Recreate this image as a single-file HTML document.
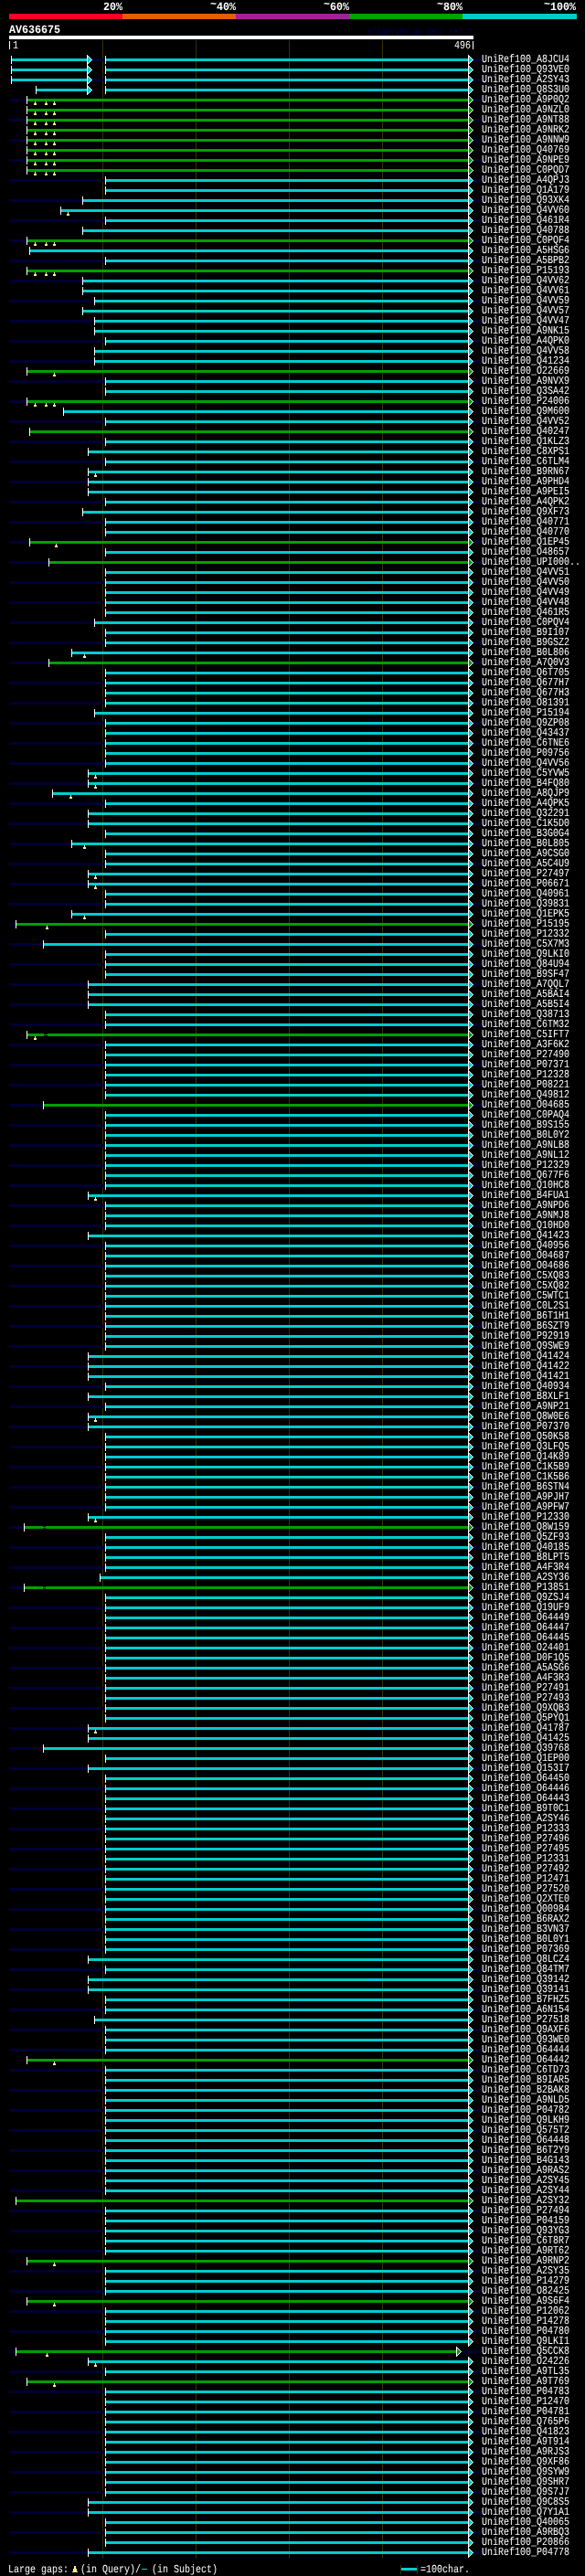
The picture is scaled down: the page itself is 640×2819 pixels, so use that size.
<!DOCTYPE html>
<html><head><meta charset="utf-8"><style>
html,body{margin:0;padding:0;background:#000;}
body{width:640px;height:2819px;overflow:hidden;position:relative;}
svg{position:absolute;left:0;top:0;display:block;}
text{font-family:"Liberation Mono";}
.lab text{font-size:12.3px;fill:#fff;text-rendering:geometricPrecision;}
.wc{will-change:transform;position:absolute;left:0;top:0;}
</style></head><body>
<div class="wc"><svg width="640" height="2819" viewBox="0 0 640 2819" shape-rendering="crispEdges">
<rect x="0" y="0" width="640" height="2819" fill="#000"/>
<g font-family="Liberation Mono" font-weight="bold" font-size="12.5" fill="#fff" text-anchor="end" style="text-rendering:geometricPrecision">
<text x="134" y="11" textLength="21" lengthAdjust="spacingAndGlyphs">20%</text>
<text x="258" y="11" textLength="21" lengthAdjust="spacingAndGlyphs">40%</text><text x="237" y="8" textLength="7" lengthAdjust="spacingAndGlyphs">~</text>
<text x="382" y="11" textLength="21" lengthAdjust="spacingAndGlyphs">60%</text><text x="361" y="8" textLength="7" lengthAdjust="spacingAndGlyphs">~</text>
<text x="506" y="11" textLength="21" lengthAdjust="spacingAndGlyphs">80%</text><text x="485" y="8" textLength="7" lengthAdjust="spacingAndGlyphs">~</text>
<text x="630" y="11" textLength="28" lengthAdjust="spacingAndGlyphs">100%</text><text x="602" y="8" textLength="7" lengthAdjust="spacingAndGlyphs">~</text>
</g>
<rect x="10" y="15" width="124" height="6" fill="#ff0022"/>
<rect x="134" y="15" width="124" height="6" fill="#e06000"/>
<rect x="258" y="15" width="124" height="6" fill="#a020a0"/>
<rect x="382" y="15" width="124" height="6" fill="#00a000"/>
<rect x="506" y="15" width="125" height="6" fill="#00cccc"/>
<text x="10" y="36" font-family="Liberation Mono" font-weight="bold" font-size="12.5" fill="#fff" textLength="56" lengthAdjust="spacingAndGlyphs" style="text-rendering:geometricPrecision">AV636675</text>
<text x="402" y="37" font-family="Liberation Mono" font-weight="bold" font-size="8.3" fill="#000040">AlignView.pm Beta rel.7</text>
<rect x="10" y="39" width="508" height="4" fill="#fff"/>
<rect x="10" y="45" width="1" height="9" fill="#fff"/>
<rect x="517" y="45" width="1" height="9" fill="#fff"/>
<g class="lab">
<rect x="112" y="44" width="1" height="2756" fill="#333300"/>
<rect x="214" y="44" width="1" height="2756" fill="#333300"/>
<rect x="316" y="44" width="1" height="2756" fill="#333300"/>
<rect x="418" y="44" width="1" height="2756" fill="#333300"/>
<rect x="10" y="64" width="517" height="3" fill="#000033"/>
<rect x="13" y="64" width="82" height="3" fill="#00cccc"/>
<rect x="12" y="61" width="1" height="9" fill="#fff"/>
<path d="M95.5 60.5L100.5 65.5L95.5 70.5Z" fill="#00cccc" stroke="#fff" stroke-width="1"/>
<rect x="116" y="64" width="396" height="3" fill="#00cccc"/>
<rect x="115" y="61" width="1" height="9" fill="#fff"/>
<path d="M512.5 60.5L517.5 65.5L512.5 70.5Z" fill="#00cccc" stroke="#fff" stroke-width="1"/>
<text x="527" y="68" textLength="96" lengthAdjust="spacingAndGlyphs">UniRef100_A8JCU4</text>
<rect x="13" y="75" width="82" height="3" fill="#00cccc"/>
<rect x="12" y="72" width="1" height="9" fill="#fff"/>
<path d="M95.5 71.5L100.5 76.5L95.5 81.5Z" fill="#00cccc" stroke="#fff" stroke-width="1"/>
<rect x="116" y="75" width="396" height="3" fill="#00cccc"/>
<rect x="115" y="72" width="1" height="9" fill="#fff"/>
<path d="M512.5 71.5L517.5 76.5L512.5 81.5Z" fill="#00cccc" stroke="#fff" stroke-width="1"/>
<text x="527" y="79" textLength="96" lengthAdjust="spacingAndGlyphs">UniRef100_Q93VE0</text>
<rect x="10" y="86" width="517" height="3" fill="#000033"/>
<rect x="13" y="86" width="82" height="3" fill="#00cccc"/>
<rect x="12" y="83" width="1" height="9" fill="#fff"/>
<path d="M95.5 82.5L100.5 87.5L95.5 92.5Z" fill="#00cccc" stroke="#fff" stroke-width="1"/>
<rect x="116" y="86" width="396" height="3" fill="#00cccc"/>
<rect x="115" y="83" width="1" height="9" fill="#fff"/>
<path d="M512.5 82.5L517.5 87.5L512.5 92.5Z" fill="#00cccc" stroke="#fff" stroke-width="1"/>
<text x="527" y="90" textLength="96" lengthAdjust="spacingAndGlyphs">UniRef100_A2SY43</text>
<rect x="40" y="97" width="55" height="3" fill="#00cccc"/>
<rect x="39" y="94" width="1" height="9" fill="#fff"/>
<path d="M95.5 93.5L100.5 98.5L95.5 103.5Z" fill="#00cccc" stroke="#fff" stroke-width="1"/>
<rect x="116" y="97" width="396" height="3" fill="#00cccc"/>
<rect x="115" y="94" width="1" height="9" fill="#fff"/>
<path d="M512.5 93.5L517.5 98.5L512.5 103.5Z" fill="#00cccc" stroke="#fff" stroke-width="1"/>
<text x="527" y="101" textLength="96" lengthAdjust="spacingAndGlyphs">UniRef100_Q8S3U0</text>
<rect x="10" y="108" width="517" height="3" fill="#000033"/>
<rect x="30" y="108" width="482" height="3" fill="#00a000"/>
<rect x="29" y="105" width="1" height="9" fill="#fff"/>
<path d="M512.5 104.5L517.5 109.5L512.5 114.5Z" fill="#00a000" stroke="#fff" stroke-width="1"/>
<rect x="38" y="111" width="1" height="2" fill="#ffee88"/><rect x="37" y="113" width="3" height="2" fill="#ffee88"/>
<rect x="50" y="111" width="1" height="2" fill="#ffee88"/><rect x="49" y="113" width="3" height="2" fill="#ffee88"/>
<rect x="59" y="111" width="1" height="2" fill="#ffee88"/><rect x="58" y="113" width="3" height="2" fill="#ffee88"/>
<text x="527" y="112" textLength="96" lengthAdjust="spacingAndGlyphs">UniRef100_A9P0Q2</text>
<rect x="30" y="119" width="482" height="3" fill="#00a000"/>
<rect x="29" y="116" width="1" height="9" fill="#fff"/>
<path d="M512.5 115.5L517.5 120.5L512.5 125.5Z" fill="#00a000" stroke="#fff" stroke-width="1"/>
<rect x="38" y="122" width="1" height="2" fill="#ffee88"/><rect x="37" y="124" width="3" height="2" fill="#ffee88"/>
<rect x="50" y="122" width="1" height="2" fill="#ffee88"/><rect x="49" y="124" width="3" height="2" fill="#ffee88"/>
<rect x="59" y="122" width="1" height="2" fill="#ffee88"/><rect x="58" y="124" width="3" height="2" fill="#ffee88"/>
<text x="527" y="123" textLength="96" lengthAdjust="spacingAndGlyphs">UniRef100_A9NZL0</text>
<rect x="10" y="130" width="517" height="3" fill="#000033"/>
<rect x="30" y="130" width="482" height="3" fill="#00a000"/>
<rect x="29" y="127" width="1" height="9" fill="#fff"/>
<path d="M512.5 126.5L517.5 131.5L512.5 136.5Z" fill="#00a000" stroke="#fff" stroke-width="1"/>
<rect x="38" y="133" width="1" height="2" fill="#ffee88"/><rect x="37" y="135" width="3" height="2" fill="#ffee88"/>
<rect x="50" y="133" width="1" height="2" fill="#ffee88"/><rect x="49" y="135" width="3" height="2" fill="#ffee88"/>
<rect x="59" y="133" width="1" height="2" fill="#ffee88"/><rect x="58" y="135" width="3" height="2" fill="#ffee88"/>
<text x="527" y="134" textLength="96" lengthAdjust="spacingAndGlyphs">UniRef100_A9NT88</text>
<rect x="30" y="141" width="482" height="3" fill="#00a000"/>
<rect x="29" y="138" width="1" height="9" fill="#fff"/>
<path d="M512.5 137.5L517.5 142.5L512.5 147.5Z" fill="#00a000" stroke="#fff" stroke-width="1"/>
<rect x="38" y="144" width="1" height="2" fill="#ffee88"/><rect x="37" y="146" width="3" height="2" fill="#ffee88"/>
<rect x="50" y="144" width="1" height="2" fill="#ffee88"/><rect x="49" y="146" width="3" height="2" fill="#ffee88"/>
<rect x="59" y="144" width="1" height="2" fill="#ffee88"/><rect x="58" y="146" width="3" height="2" fill="#ffee88"/>
<text x="527" y="145" textLength="96" lengthAdjust="spacingAndGlyphs">UniRef100_A9NRK2</text>
<rect x="10" y="152" width="517" height="3" fill="#000033"/>
<rect x="30" y="152" width="482" height="3" fill="#00a000"/>
<rect x="29" y="149" width="1" height="9" fill="#fff"/>
<path d="M512.5 148.5L517.5 153.5L512.5 158.5Z" fill="#00a000" stroke="#fff" stroke-width="1"/>
<rect x="38" y="155" width="1" height="2" fill="#ffee88"/><rect x="37" y="157" width="3" height="2" fill="#ffee88"/>
<rect x="50" y="155" width="1" height="2" fill="#ffee88"/><rect x="49" y="157" width="3" height="2" fill="#ffee88"/>
<rect x="59" y="155" width="1" height="2" fill="#ffee88"/><rect x="58" y="157" width="3" height="2" fill="#ffee88"/>
<text x="527" y="156" textLength="96" lengthAdjust="spacingAndGlyphs">UniRef100_A9NNW9</text>
<rect x="30" y="163" width="482" height="3" fill="#00a000"/>
<rect x="29" y="160" width="1" height="9" fill="#fff"/>
<path d="M512.5 159.5L517.5 164.5L512.5 169.5Z" fill="#00a000" stroke="#fff" stroke-width="1"/>
<rect x="38" y="166" width="1" height="2" fill="#ffee88"/><rect x="37" y="168" width="3" height="2" fill="#ffee88"/>
<rect x="50" y="166" width="1" height="2" fill="#ffee88"/><rect x="49" y="168" width="3" height="2" fill="#ffee88"/>
<rect x="59" y="166" width="1" height="2" fill="#ffee88"/><rect x="58" y="168" width="3" height="2" fill="#ffee88"/>
<text x="527" y="167" textLength="96" lengthAdjust="spacingAndGlyphs">UniRef100_Q40769</text>
<rect x="10" y="174" width="517" height="3" fill="#000033"/>
<rect x="30" y="174" width="482" height="3" fill="#00a000"/>
<rect x="29" y="171" width="1" height="9" fill="#fff"/>
<path d="M512.5 170.5L517.5 175.5L512.5 180.5Z" fill="#00a000" stroke="#fff" stroke-width="1"/>
<rect x="38" y="177" width="1" height="2" fill="#ffee88"/><rect x="37" y="179" width="3" height="2" fill="#ffee88"/>
<rect x="50" y="177" width="1" height="2" fill="#ffee88"/><rect x="49" y="179" width="3" height="2" fill="#ffee88"/>
<rect x="59" y="177" width="1" height="2" fill="#ffee88"/><rect x="58" y="179" width="3" height="2" fill="#ffee88"/>
<text x="527" y="178" textLength="96" lengthAdjust="spacingAndGlyphs">UniRef100_A9NPE9</text>
<rect x="30" y="185" width="482" height="3" fill="#00a000"/>
<rect x="29" y="182" width="1" height="9" fill="#fff"/>
<path d="M512.5 181.5L517.5 186.5L512.5 191.5Z" fill="#00a000" stroke="#fff" stroke-width="1"/>
<rect x="38" y="188" width="1" height="2" fill="#ffee88"/><rect x="37" y="190" width="3" height="2" fill="#ffee88"/>
<rect x="50" y="188" width="1" height="2" fill="#ffee88"/><rect x="49" y="190" width="3" height="2" fill="#ffee88"/>
<rect x="59" y="188" width="1" height="2" fill="#ffee88"/><rect x="58" y="190" width="3" height="2" fill="#ffee88"/>
<text x="527" y="189" textLength="96" lengthAdjust="spacingAndGlyphs">UniRef100_C0PQD7</text>
<rect x="10" y="196" width="517" height="3" fill="#000033"/>
<rect x="116" y="196" width="396" height="3" fill="#00cccc"/>
<rect x="115" y="193" width="1" height="9" fill="#fff"/>
<path d="M512.5 192.5L517.5 197.5L512.5 202.5Z" fill="#00cccc" stroke="#fff" stroke-width="1"/>
<text x="527" y="200" textLength="96" lengthAdjust="spacingAndGlyphs">UniRef100_A4QPJ3</text>
<rect x="116" y="207" width="396" height="3" fill="#00cccc"/>
<rect x="115" y="204" width="1" height="9" fill="#fff"/>
<path d="M512.5 203.5L517.5 208.5L512.5 213.5Z" fill="#00cccc" stroke="#fff" stroke-width="1"/>
<text x="527" y="211" textLength="96" lengthAdjust="spacingAndGlyphs">UniRef100_Q1A179</text>
<rect x="10" y="218" width="517" height="3" fill="#000033"/>
<rect x="91" y="218" width="421" height="3" fill="#00cccc"/>
<rect x="90" y="215" width="1" height="9" fill="#fff"/>
<path d="M512.5 214.5L517.5 219.5L512.5 224.5Z" fill="#00cccc" stroke="#fff" stroke-width="1"/>
<text x="527" y="222" textLength="96" lengthAdjust="spacingAndGlyphs">UniRef100_Q93XK4</text>
<rect x="67" y="229" width="445" height="3" fill="#00cccc"/>
<rect x="66" y="226" width="1" height="9" fill="#fff"/>
<path d="M512.5 225.5L517.5 230.5L512.5 235.5Z" fill="#00cccc" stroke="#fff" stroke-width="1"/>
<rect x="74" y="232" width="1" height="2" fill="#ffee88"/><rect x="73" y="234" width="3" height="2" fill="#ffee88"/>
<text x="527" y="233" textLength="96" lengthAdjust="spacingAndGlyphs">UniRef100_Q4VV60</text>
<rect x="10" y="240" width="517" height="3" fill="#000033"/>
<rect x="116" y="240" width="396" height="3" fill="#00cccc"/>
<rect x="115" y="237" width="1" height="9" fill="#fff"/>
<path d="M512.5 236.5L517.5 241.5L512.5 246.5Z" fill="#00cccc" stroke="#fff" stroke-width="1"/>
<text x="527" y="244" textLength="96" lengthAdjust="spacingAndGlyphs">UniRef100_Q461R4</text>
<rect x="91" y="251" width="421" height="3" fill="#00cccc"/>
<rect x="90" y="248" width="1" height="9" fill="#fff"/>
<path d="M512.5 247.5L517.5 252.5L512.5 257.5Z" fill="#00cccc" stroke="#fff" stroke-width="1"/>
<text x="527" y="255" textLength="96" lengthAdjust="spacingAndGlyphs">UniRef100_Q40788</text>
<rect x="10" y="262" width="517" height="3" fill="#000033"/>
<rect x="30" y="262" width="482" height="3" fill="#00a000"/>
<rect x="29" y="259" width="1" height="9" fill="#fff"/>
<path d="M512.5 258.5L517.5 263.5L512.5 268.5Z" fill="#00a000" stroke="#fff" stroke-width="1"/>
<rect x="38" y="265" width="1" height="2" fill="#ffee88"/><rect x="37" y="267" width="3" height="2" fill="#ffee88"/>
<rect x="50" y="265" width="1" height="2" fill="#ffee88"/><rect x="49" y="267" width="3" height="2" fill="#ffee88"/>
<rect x="59" y="265" width="1" height="2" fill="#ffee88"/><rect x="58" y="267" width="3" height="2" fill="#ffee88"/>
<text x="527" y="266" textLength="96" lengthAdjust="spacingAndGlyphs">UniRef100_C0PQF4</text>
<rect x="33" y="273" width="479" height="3" fill="#00cccc"/>
<rect x="32" y="270" width="1" height="9" fill="#fff"/>
<path d="M512.5 269.5L517.5 274.5L512.5 279.5Z" fill="#00cccc" stroke="#fff" stroke-width="1"/>
<text x="527" y="277" textLength="96" lengthAdjust="spacingAndGlyphs">UniRef100_A5HSG6</text>
<rect x="10" y="284" width="517" height="3" fill="#000033"/>
<rect x="116" y="284" width="396" height="3" fill="#00cccc"/>
<rect x="115" y="281" width="1" height="9" fill="#fff"/>
<path d="M512.5 280.5L517.5 285.5L512.5 290.5Z" fill="#00cccc" stroke="#fff" stroke-width="1"/>
<text x="527" y="288" textLength="96" lengthAdjust="spacingAndGlyphs">UniRef100_A5BPB2</text>
<rect x="30" y="295" width="482" height="3" fill="#00a000"/>
<rect x="29" y="292" width="1" height="9" fill="#fff"/>
<path d="M512.5 291.5L517.5 296.5L512.5 301.5Z" fill="#00a000" stroke="#fff" stroke-width="1"/>
<rect x="38" y="298" width="1" height="2" fill="#ffee88"/><rect x="37" y="300" width="3" height="2" fill="#ffee88"/>
<rect x="50" y="298" width="1" height="2" fill="#ffee88"/><rect x="49" y="300" width="3" height="2" fill="#ffee88"/>
<rect x="59" y="298" width="1" height="2" fill="#ffee88"/><rect x="58" y="300" width="3" height="2" fill="#ffee88"/>
<text x="527" y="299" textLength="96" lengthAdjust="spacingAndGlyphs">UniRef100_P15193</text>
<rect x="10" y="306" width="517" height="3" fill="#000033"/>
<rect x="91" y="306" width="421" height="3" fill="#00cccc"/>
<rect x="90" y="303" width="1" height="9" fill="#fff"/>
<path d="M512.5 302.5L517.5 307.5L512.5 312.5Z" fill="#00cccc" stroke="#fff" stroke-width="1"/>
<text x="527" y="310" textLength="96" lengthAdjust="spacingAndGlyphs">UniRef100_Q4VV62</text>
<rect x="91" y="317" width="421" height="3" fill="#00cccc"/>
<rect x="90" y="314" width="1" height="9" fill="#fff"/>
<path d="M512.5 313.5L517.5 318.5L512.5 323.5Z" fill="#00cccc" stroke="#fff" stroke-width="1"/>
<text x="527" y="321" textLength="96" lengthAdjust="spacingAndGlyphs">UniRef100_Q4VV61</text>
<rect x="10" y="328" width="517" height="3" fill="#000033"/>
<rect x="104" y="328" width="408" height="3" fill="#00cccc"/>
<rect x="103" y="325" width="1" height="9" fill="#fff"/>
<path d="M512.5 324.5L517.5 329.5L512.5 334.5Z" fill="#00cccc" stroke="#fff" stroke-width="1"/>
<text x="527" y="332" textLength="96" lengthAdjust="spacingAndGlyphs">UniRef100_Q4VV59</text>
<rect x="91" y="339" width="421" height="3" fill="#00cccc"/>
<rect x="90" y="336" width="1" height="9" fill="#fff"/>
<path d="M512.5 335.5L517.5 340.5L512.5 345.5Z" fill="#00cccc" stroke="#fff" stroke-width="1"/>
<text x="527" y="343" textLength="96" lengthAdjust="spacingAndGlyphs">UniRef100_Q4VV57</text>
<rect x="10" y="350" width="517" height="3" fill="#000033"/>
<rect x="104" y="350" width="408" height="3" fill="#00cccc"/>
<rect x="103" y="347" width="1" height="9" fill="#fff"/>
<path d="M512.5 346.5L517.5 351.5L512.5 356.5Z" fill="#00cccc" stroke="#fff" stroke-width="1"/>
<text x="527" y="354" textLength="96" lengthAdjust="spacingAndGlyphs">UniRef100_Q4VV47</text>
<rect x="104" y="361" width="408" height="3" fill="#00cccc"/>
<rect x="103" y="358" width="1" height="9" fill="#fff"/>
<path d="M512.5 357.5L517.5 362.5L512.5 367.5Z" fill="#00cccc" stroke="#fff" stroke-width="1"/>
<text x="527" y="365" textLength="96" lengthAdjust="spacingAndGlyphs">UniRef100_A9NK15</text>
<rect x="10" y="372" width="517" height="3" fill="#000033"/>
<rect x="116" y="372" width="396" height="3" fill="#00cccc"/>
<rect x="115" y="369" width="1" height="9" fill="#fff"/>
<path d="M512.5 368.5L517.5 373.5L512.5 378.5Z" fill="#00cccc" stroke="#fff" stroke-width="1"/>
<text x="527" y="376" textLength="96" lengthAdjust="spacingAndGlyphs">UniRef100_A4QPK0</text>
<rect x="104" y="383" width="408" height="3" fill="#00cccc"/>
<rect x="103" y="380" width="1" height="9" fill="#fff"/>
<path d="M512.5 379.5L517.5 384.5L512.5 389.5Z" fill="#00cccc" stroke="#fff" stroke-width="1"/>
<text x="527" y="387" textLength="96" lengthAdjust="spacingAndGlyphs">UniRef100_Q4VV58</text>
<rect x="10" y="394" width="517" height="3" fill="#000033"/>
<rect x="104" y="394" width="408" height="3" fill="#00cccc"/>
<rect x="103" y="391" width="1" height="9" fill="#fff"/>
<path d="M512.5 390.5L517.5 395.5L512.5 400.5Z" fill="#00cccc" stroke="#fff" stroke-width="1"/>
<text x="527" y="398" textLength="96" lengthAdjust="spacingAndGlyphs">UniRef100_Q41234</text>
<rect x="30" y="405" width="482" height="3" fill="#00a000"/>
<rect x="29" y="402" width="1" height="9" fill="#fff"/>
<path d="M512.5 401.5L517.5 406.5L512.5 411.5Z" fill="#00a000" stroke="#fff" stroke-width="1"/>
<rect x="59" y="408" width="1" height="2" fill="#ffee88"/><rect x="58" y="410" width="3" height="2" fill="#ffee88"/>
<text x="527" y="409" textLength="96" lengthAdjust="spacingAndGlyphs">UniRef100_O22669</text>
<rect x="10" y="416" width="517" height="3" fill="#000033"/>
<rect x="116" y="416" width="396" height="3" fill="#00cccc"/>
<rect x="115" y="413" width="1" height="9" fill="#fff"/>
<path d="M512.5 412.5L517.5 417.5L512.5 422.5Z" fill="#00cccc" stroke="#fff" stroke-width="1"/>
<text x="527" y="420" textLength="96" lengthAdjust="spacingAndGlyphs">UniRef100_A9NVX9</text>
<rect x="116" y="427" width="396" height="3" fill="#00cccc"/>
<rect x="115" y="424" width="1" height="9" fill="#fff"/>
<path d="M512.5 423.5L517.5 428.5L512.5 433.5Z" fill="#00cccc" stroke="#fff" stroke-width="1"/>
<text x="527" y="431" textLength="96" lengthAdjust="spacingAndGlyphs">UniRef100_Q3SA42</text>
<rect x="10" y="438" width="517" height="3" fill="#000033"/>
<rect x="30" y="438" width="482" height="3" fill="#00a000"/>
<rect x="29" y="435" width="1" height="9" fill="#fff"/>
<path d="M512.5 434.5L517.5 439.5L512.5 444.5Z" fill="#00a000" stroke="#fff" stroke-width="1"/>
<rect x="38" y="441" width="1" height="2" fill="#ffee88"/><rect x="37" y="443" width="3" height="2" fill="#ffee88"/>
<rect x="50" y="441" width="1" height="2" fill="#ffee88"/><rect x="49" y="443" width="3" height="2" fill="#ffee88"/>
<rect x="59" y="441" width="1" height="2" fill="#ffee88"/><rect x="58" y="443" width="3" height="2" fill="#ffee88"/>
<text x="527" y="442" textLength="96" lengthAdjust="spacingAndGlyphs">UniRef100_P24006</text>
<rect x="70" y="449" width="442" height="3" fill="#00cccc"/>
<rect x="69" y="446" width="1" height="9" fill="#fff"/>
<path d="M512.5 445.5L517.5 450.5L512.5 455.5Z" fill="#00cccc" stroke="#fff" stroke-width="1"/>
<text x="527" y="453" textLength="96" lengthAdjust="spacingAndGlyphs">UniRef100_Q9M600</text>
<rect x="10" y="460" width="517" height="3" fill="#000033"/>
<rect x="116" y="460" width="396" height="3" fill="#00cccc"/>
<rect x="115" y="457" width="1" height="9" fill="#fff"/>
<path d="M512.5 456.5L517.5 461.5L512.5 466.5Z" fill="#00cccc" stroke="#fff" stroke-width="1"/>
<text x="527" y="464" textLength="96" lengthAdjust="spacingAndGlyphs">UniRef100_Q4VV52</text>
<rect x="33" y="471" width="479" height="3" fill="#00a000"/>
<rect x="32" y="468" width="1" height="9" fill="#fff"/>
<path d="M512.5 467.5L517.5 472.5L512.5 477.5Z" fill="#00a000" stroke="#fff" stroke-width="1"/>
<text x="527" y="475" textLength="96" lengthAdjust="spacingAndGlyphs">UniRef100_Q40247</text>
<rect x="10" y="482" width="517" height="3" fill="#000033"/>
<rect x="116" y="482" width="396" height="3" fill="#00cccc"/>
<rect x="115" y="479" width="1" height="9" fill="#fff"/>
<path d="M512.5 478.5L517.5 483.5L512.5 488.5Z" fill="#00cccc" stroke="#fff" stroke-width="1"/>
<text x="527" y="486" textLength="96" lengthAdjust="spacingAndGlyphs">UniRef100_Q1KLZ3</text>
<rect x="97" y="493" width="415" height="3" fill="#00cccc"/>
<rect x="96" y="490" width="1" height="9" fill="#fff"/>
<path d="M512.5 489.5L517.5 494.5L512.5 499.5Z" fill="#00cccc" stroke="#fff" stroke-width="1"/>
<text x="527" y="497" textLength="96" lengthAdjust="spacingAndGlyphs">UniRef100_C8XPS1</text>
<rect x="10" y="504" width="517" height="3" fill="#000033"/>
<rect x="116" y="504" width="396" height="3" fill="#00cccc"/>
<rect x="115" y="501" width="1" height="9" fill="#fff"/>
<path d="M512.5 500.5L517.5 505.5L512.5 510.5Z" fill="#00cccc" stroke="#fff" stroke-width="1"/>
<text x="527" y="508" textLength="96" lengthAdjust="spacingAndGlyphs">UniRef100_C6TLM4</text>
<rect x="97" y="515" width="415" height="3" fill="#00cccc"/>
<rect x="96" y="512" width="1" height="9" fill="#fff"/>
<path d="M512.5 511.5L517.5 516.5L512.5 521.5Z" fill="#00cccc" stroke="#fff" stroke-width="1"/>
<rect x="104" y="518" width="1" height="2" fill="#ffee88"/><rect x="103" y="520" width="3" height="2" fill="#ffee88"/>
<text x="527" y="519" textLength="96" lengthAdjust="spacingAndGlyphs">UniRef100_B9RN67</text>
<rect x="10" y="526" width="517" height="3" fill="#000033"/>
<rect x="97" y="526" width="415" height="3" fill="#00cccc"/>
<rect x="96" y="523" width="1" height="9" fill="#fff"/>
<path d="M512.5 522.5L517.5 527.5L512.5 532.5Z" fill="#00cccc" stroke="#fff" stroke-width="1"/>
<text x="527" y="530" textLength="96" lengthAdjust="spacingAndGlyphs">UniRef100_A9PHD4</text>
<rect x="97" y="537" width="415" height="3" fill="#00cccc"/>
<rect x="96" y="534" width="1" height="9" fill="#fff"/>
<path d="M512.5 533.5L517.5 538.5L512.5 543.5Z" fill="#00cccc" stroke="#fff" stroke-width="1"/>
<text x="527" y="541" textLength="96" lengthAdjust="spacingAndGlyphs">UniRef100_A9PEI5</text>
<rect x="10" y="548" width="517" height="3" fill="#000033"/>
<rect x="116" y="548" width="396" height="3" fill="#00cccc"/>
<rect x="115" y="545" width="1" height="9" fill="#fff"/>
<path d="M512.5 544.5L517.5 549.5L512.5 554.5Z" fill="#00cccc" stroke="#fff" stroke-width="1"/>
<text x="527" y="552" textLength="96" lengthAdjust="spacingAndGlyphs">UniRef100_A4QPK2</text>
<rect x="91" y="559" width="421" height="3" fill="#00cccc"/>
<rect x="90" y="556" width="1" height="9" fill="#fff"/>
<path d="M512.5 555.5L517.5 560.5L512.5 565.5Z" fill="#00cccc" stroke="#fff" stroke-width="1"/>
<text x="527" y="563" textLength="96" lengthAdjust="spacingAndGlyphs">UniRef100_Q9XF73</text>
<rect x="10" y="570" width="517" height="3" fill="#000033"/>
<rect x="116" y="570" width="396" height="3" fill="#00cccc"/>
<rect x="115" y="567" width="1" height="9" fill="#fff"/>
<path d="M512.5 566.5L517.5 571.5L512.5 576.5Z" fill="#00cccc" stroke="#fff" stroke-width="1"/>
<text x="527" y="574" textLength="96" lengthAdjust="spacingAndGlyphs">UniRef100_Q40771</text>
<rect x="116" y="581" width="396" height="3" fill="#00cccc"/>
<rect x="115" y="578" width="1" height="9" fill="#fff"/>
<path d="M512.5 577.5L517.5 582.5L512.5 587.5Z" fill="#00cccc" stroke="#fff" stroke-width="1"/>
<text x="527" y="585" textLength="96" lengthAdjust="spacingAndGlyphs">UniRef100_Q40770</text>
<rect x="10" y="592" width="517" height="3" fill="#000033"/>
<rect x="33" y="592" width="479" height="3" fill="#00a000"/>
<rect x="32" y="589" width="1" height="9" fill="#fff"/>
<path d="M512.5 588.5L517.5 593.5L512.5 598.5Z" fill="#00a000" stroke="#fff" stroke-width="1"/>
<rect x="61" y="595" width="1" height="2" fill="#ffee88"/><rect x="60" y="597" width="3" height="2" fill="#ffee88"/>
<text x="527" y="596" textLength="96" lengthAdjust="spacingAndGlyphs">UniRef100_Q1EP45</text>
<rect x="116" y="603" width="396" height="3" fill="#00cccc"/>
<rect x="115" y="600" width="1" height="9" fill="#fff"/>
<path d="M512.5 599.5L517.5 604.5L512.5 609.5Z" fill="#00cccc" stroke="#fff" stroke-width="1"/>
<text x="527" y="607" textLength="96" lengthAdjust="spacingAndGlyphs">UniRef100_O48657</text>
<rect x="10" y="614" width="517" height="3" fill="#000033"/>
<rect x="54" y="614" width="458" height="3" fill="#00a000"/>
<rect x="53" y="611" width="1" height="9" fill="#fff"/>
<path d="M512.5 610.5L517.5 615.5L512.5 620.5Z" fill="#00a000" stroke="#fff" stroke-width="1"/>
<text x="527" y="618" textLength="108" lengthAdjust="spacingAndGlyphs">UniRef100_UPI000..</text>
<rect x="116" y="625" width="396" height="3" fill="#00cccc"/>
<rect x="115" y="622" width="1" height="9" fill="#fff"/>
<path d="M512.5 621.5L517.5 626.5L512.5 631.5Z" fill="#00cccc" stroke="#fff" stroke-width="1"/>
<text x="527" y="629" textLength="96" lengthAdjust="spacingAndGlyphs">UniRef100_Q4VV51</text>
<rect x="10" y="636" width="517" height="3" fill="#000033"/>
<rect x="116" y="636" width="396" height="3" fill="#00cccc"/>
<rect x="115" y="633" width="1" height="9" fill="#fff"/>
<path d="M512.5 632.5L517.5 637.5L512.5 642.5Z" fill="#00cccc" stroke="#fff" stroke-width="1"/>
<text x="527" y="640" textLength="96" lengthAdjust="spacingAndGlyphs">UniRef100_Q4VV50</text>
<rect x="116" y="647" width="396" height="3" fill="#00cccc"/>
<rect x="115" y="644" width="1" height="9" fill="#fff"/>
<path d="M512.5 643.5L517.5 648.5L512.5 653.5Z" fill="#00cccc" stroke="#fff" stroke-width="1"/>
<text x="527" y="651" textLength="96" lengthAdjust="spacingAndGlyphs">UniRef100_Q4VV49</text>
<rect x="10" y="658" width="517" height="3" fill="#000033"/>
<rect x="116" y="658" width="396" height="3" fill="#00cccc"/>
<rect x="115" y="655" width="1" height="9" fill="#fff"/>
<path d="M512.5 654.5L517.5 659.5L512.5 664.5Z" fill="#00cccc" stroke="#fff" stroke-width="1"/>
<text x="527" y="662" textLength="96" lengthAdjust="spacingAndGlyphs">UniRef100_Q4VV48</text>
<rect x="116" y="669" width="396" height="3" fill="#00cccc"/>
<rect x="115" y="666" width="1" height="9" fill="#fff"/>
<path d="M512.5 665.5L517.5 670.5L512.5 675.5Z" fill="#00cccc" stroke="#fff" stroke-width="1"/>
<text x="527" y="673" textLength="96" lengthAdjust="spacingAndGlyphs">UniRef100_Q461R5</text>
<rect x="10" y="680" width="517" height="3" fill="#000033"/>
<rect x="104" y="680" width="408" height="3" fill="#00cccc"/>
<rect x="103" y="677" width="1" height="9" fill="#fff"/>
<path d="M512.5 676.5L517.5 681.5L512.5 686.5Z" fill="#00cccc" stroke="#fff" stroke-width="1"/>
<text x="527" y="684" textLength="96" lengthAdjust="spacingAndGlyphs">UniRef100_C0PQV4</text>
<rect x="116" y="691" width="396" height="3" fill="#00cccc"/>
<rect x="115" y="688" width="1" height="9" fill="#fff"/>
<path d="M512.5 687.5L517.5 692.5L512.5 697.5Z" fill="#00cccc" stroke="#fff" stroke-width="1"/>
<text x="527" y="695" textLength="96" lengthAdjust="spacingAndGlyphs">UniRef100_B9I107</text>
<rect x="10" y="702" width="517" height="3" fill="#000033"/>
<rect x="116" y="702" width="396" height="3" fill="#00cccc"/>
<rect x="115" y="699" width="1" height="9" fill="#fff"/>
<path d="M512.5 698.5L517.5 703.5L512.5 708.5Z" fill="#00cccc" stroke="#fff" stroke-width="1"/>
<text x="527" y="706" textLength="96" lengthAdjust="spacingAndGlyphs">UniRef100_B9GSZ2</text>
<rect x="79" y="713" width="433" height="3" fill="#00cccc"/>
<rect x="78" y="710" width="1" height="9" fill="#fff"/>
<path d="M512.5 709.5L517.5 714.5L512.5 719.5Z" fill="#00cccc" stroke="#fff" stroke-width="1"/>
<rect x="92" y="716" width="1" height="2" fill="#ffee88"/><rect x="91" y="718" width="3" height="2" fill="#ffee88"/>
<text x="527" y="717" textLength="96" lengthAdjust="spacingAndGlyphs">UniRef100_B0L806</text>
<rect x="10" y="724" width="517" height="3" fill="#000033"/>
<rect x="54" y="724" width="458" height="3" fill="#00a000"/>
<rect x="53" y="721" width="1" height="9" fill="#fff"/>
<path d="M512.5 720.5L517.5 725.5L512.5 730.5Z" fill="#00a000" stroke="#fff" stroke-width="1"/>
<text x="527" y="728" textLength="96" lengthAdjust="spacingAndGlyphs">UniRef100_A7Q0V3</text>
<rect x="116" y="735" width="396" height="3" fill="#00cccc"/>
<rect x="115" y="732" width="1" height="9" fill="#fff"/>
<path d="M512.5 731.5L517.5 736.5L512.5 741.5Z" fill="#00cccc" stroke="#fff" stroke-width="1"/>
<text x="527" y="739" textLength="96" lengthAdjust="spacingAndGlyphs">UniRef100_Q6T705</text>
<rect x="10" y="746" width="517" height="3" fill="#000033"/>
<rect x="116" y="746" width="396" height="3" fill="#00cccc"/>
<rect x="115" y="743" width="1" height="9" fill="#fff"/>
<path d="M512.5 742.5L517.5 747.5L512.5 752.5Z" fill="#00cccc" stroke="#fff" stroke-width="1"/>
<text x="527" y="750" textLength="96" lengthAdjust="spacingAndGlyphs">UniRef100_Q677H7</text>
<rect x="116" y="757" width="396" height="3" fill="#00cccc"/>
<rect x="115" y="754" width="1" height="9" fill="#fff"/>
<path d="M512.5 753.5L517.5 758.5L512.5 763.5Z" fill="#00cccc" stroke="#fff" stroke-width="1"/>
<text x="527" y="761" textLength="96" lengthAdjust="spacingAndGlyphs">UniRef100_Q677H3</text>
<rect x="10" y="768" width="517" height="3" fill="#000033"/>
<rect x="116" y="768" width="396" height="3" fill="#00cccc"/>
<rect x="115" y="765" width="1" height="9" fill="#fff"/>
<path d="M512.5 764.5L517.5 769.5L512.5 774.5Z" fill="#00cccc" stroke="#fff" stroke-width="1"/>
<text x="527" y="772" textLength="96" lengthAdjust="spacingAndGlyphs">UniRef100_O81391</text>
<rect x="104" y="779" width="408" height="3" fill="#00cccc"/>
<rect x="103" y="776" width="1" height="9" fill="#fff"/>
<path d="M512.5 775.5L517.5 780.5L512.5 785.5Z" fill="#00cccc" stroke="#fff" stroke-width="1"/>
<text x="527" y="783" textLength="96" lengthAdjust="spacingAndGlyphs">UniRef100_P15194</text>
<rect x="10" y="790" width="517" height="3" fill="#000033"/>
<rect x="116" y="790" width="396" height="3" fill="#00cccc"/>
<rect x="115" y="787" width="1" height="9" fill="#fff"/>
<path d="M512.5 786.5L517.5 791.5L512.5 796.5Z" fill="#00cccc" stroke="#fff" stroke-width="1"/>
<text x="527" y="794" textLength="96" lengthAdjust="spacingAndGlyphs">UniRef100_Q9ZP08</text>
<rect x="116" y="801" width="396" height="3" fill="#00cccc"/>
<rect x="115" y="798" width="1" height="9" fill="#fff"/>
<path d="M512.5 797.5L517.5 802.5L512.5 807.5Z" fill="#00cccc" stroke="#fff" stroke-width="1"/>
<text x="527" y="805" textLength="96" lengthAdjust="spacingAndGlyphs">UniRef100_Q43437</text>
<rect x="10" y="812" width="517" height="3" fill="#000033"/>
<rect x="116" y="812" width="396" height="3" fill="#00cccc"/>
<rect x="115" y="809" width="1" height="9" fill="#fff"/>
<path d="M512.5 808.5L517.5 813.5L512.5 818.5Z" fill="#00cccc" stroke="#fff" stroke-width="1"/>
<text x="527" y="816" textLength="96" lengthAdjust="spacingAndGlyphs">UniRef100_C6TNE6</text>
<rect x="116" y="823" width="396" height="3" fill="#00cccc"/>
<rect x="115" y="820" width="1" height="9" fill="#fff"/>
<path d="M512.5 819.5L517.5 824.5L512.5 829.5Z" fill="#00cccc" stroke="#fff" stroke-width="1"/>
<text x="527" y="827" textLength="96" lengthAdjust="spacingAndGlyphs">UniRef100_P09756</text>
<rect x="10" y="834" width="517" height="3" fill="#000033"/>
<rect x="116" y="834" width="396" height="3" fill="#00cccc"/>
<rect x="115" y="831" width="1" height="9" fill="#fff"/>
<path d="M512.5 830.5L517.5 835.5L512.5 840.5Z" fill="#00cccc" stroke="#fff" stroke-width="1"/>
<text x="527" y="838" textLength="96" lengthAdjust="spacingAndGlyphs">UniRef100_Q4VV56</text>
<rect x="97" y="845" width="415" height="3" fill="#00cccc"/>
<rect x="96" y="842" width="1" height="9" fill="#fff"/>
<path d="M512.5 841.5L517.5 846.5L512.5 851.5Z" fill="#00cccc" stroke="#fff" stroke-width="1"/>
<rect x="104" y="848" width="1" height="2" fill="#ffee88"/><rect x="103" y="850" width="3" height="2" fill="#ffee88"/>
<text x="527" y="849" textLength="96" lengthAdjust="spacingAndGlyphs">UniRef100_C5YVW5</text>
<rect x="10" y="856" width="517" height="3" fill="#000033"/>
<rect x="97" y="856" width="415" height="3" fill="#00cccc"/>
<rect x="96" y="853" width="1" height="9" fill="#fff"/>
<path d="M512.5 852.5L517.5 857.5L512.5 862.5Z" fill="#00cccc" stroke="#fff" stroke-width="1"/>
<rect x="104" y="859" width="1" height="2" fill="#ffee88"/><rect x="103" y="861" width="3" height="2" fill="#ffee88"/>
<text x="527" y="860" textLength="96" lengthAdjust="spacingAndGlyphs">UniRef100_B4FQ80</text>
<rect x="58" y="867" width="454" height="3" fill="#00cccc"/>
<rect x="57" y="864" width="1" height="9" fill="#fff"/>
<path d="M512.5 863.5L517.5 868.5L512.5 873.5Z" fill="#00cccc" stroke="#fff" stroke-width="1"/>
<rect x="77" y="870" width="1" height="2" fill="#ffee88"/><rect x="76" y="872" width="3" height="2" fill="#ffee88"/>
<text x="527" y="871" textLength="96" lengthAdjust="spacingAndGlyphs">UniRef100_A8QJP9</text>
<rect x="10" y="878" width="517" height="3" fill="#000033"/>
<rect x="116" y="878" width="396" height="3" fill="#00cccc"/>
<rect x="115" y="875" width="1" height="9" fill="#fff"/>
<path d="M512.5 874.5L517.5 879.5L512.5 884.5Z" fill="#00cccc" stroke="#fff" stroke-width="1"/>
<text x="527" y="882" textLength="96" lengthAdjust="spacingAndGlyphs">UniRef100_A4QPK5</text>
<rect x="97" y="889" width="415" height="3" fill="#00cccc"/>
<rect x="96" y="886" width="1" height="9" fill="#fff"/>
<path d="M512.5 885.5L517.5 890.5L512.5 895.5Z" fill="#00cccc" stroke="#fff" stroke-width="1"/>
<text x="527" y="893" textLength="96" lengthAdjust="spacingAndGlyphs">UniRef100_Q32291</text>
<rect x="10" y="900" width="517" height="3" fill="#000033"/>
<rect x="97" y="900" width="415" height="3" fill="#00cccc"/>
<rect x="96" y="897" width="1" height="9" fill="#fff"/>
<path d="M512.5 896.5L517.5 901.5L512.5 906.5Z" fill="#00cccc" stroke="#fff" stroke-width="1"/>
<text x="527" y="904" textLength="96" lengthAdjust="spacingAndGlyphs">UniRef100_C1K5D0</text>
<rect x="116" y="911" width="396" height="3" fill="#00cccc"/>
<rect x="115" y="908" width="1" height="9" fill="#fff"/>
<path d="M512.5 907.5L517.5 912.5L512.5 917.5Z" fill="#00cccc" stroke="#fff" stroke-width="1"/>
<text x="527" y="915" textLength="96" lengthAdjust="spacingAndGlyphs">UniRef100_B3G0G4</text>
<rect x="10" y="922" width="517" height="3" fill="#000033"/>
<rect x="79" y="922" width="433" height="3" fill="#00cccc"/>
<rect x="78" y="919" width="1" height="9" fill="#fff"/>
<path d="M512.5 918.5L517.5 923.5L512.5 928.5Z" fill="#00cccc" stroke="#fff" stroke-width="1"/>
<rect x="92" y="925" width="1" height="2" fill="#ffee88"/><rect x="91" y="927" width="3" height="2" fill="#ffee88"/>
<text x="527" y="926" textLength="96" lengthAdjust="spacingAndGlyphs">UniRef100_B0L805</text>
<rect x="116" y="933" width="396" height="3" fill="#00cccc"/>
<rect x="115" y="930" width="1" height="9" fill="#fff"/>
<path d="M512.5 929.5L517.5 934.5L512.5 939.5Z" fill="#00cccc" stroke="#fff" stroke-width="1"/>
<text x="527" y="937" textLength="96" lengthAdjust="spacingAndGlyphs">UniRef100_A9CSG0</text>
<rect x="10" y="944" width="517" height="3" fill="#000033"/>
<rect x="116" y="944" width="396" height="3" fill="#00cccc"/>
<rect x="115" y="941" width="1" height="9" fill="#fff"/>
<path d="M512.5 940.5L517.5 945.5L512.5 950.5Z" fill="#00cccc" stroke="#fff" stroke-width="1"/>
<text x="527" y="948" textLength="96" lengthAdjust="spacingAndGlyphs">UniRef100_A5C4U9</text>
<rect x="97" y="955" width="415" height="3" fill="#00cccc"/>
<rect x="96" y="952" width="1" height="9" fill="#fff"/>
<path d="M512.5 951.5L517.5 956.5L512.5 961.5Z" fill="#00cccc" stroke="#fff" stroke-width="1"/>
<rect x="104" y="958" width="1" height="2" fill="#ffee88"/><rect x="103" y="960" width="3" height="2" fill="#ffee88"/>
<text x="527" y="959" textLength="96" lengthAdjust="spacingAndGlyphs">UniRef100_P27497</text>
<rect x="10" y="966" width="517" height="3" fill="#000033"/>
<rect x="97" y="966" width="415" height="3" fill="#00cccc"/>
<rect x="96" y="963" width="1" height="9" fill="#fff"/>
<path d="M512.5 962.5L517.5 967.5L512.5 972.5Z" fill="#00cccc" stroke="#fff" stroke-width="1"/>
<rect x="104" y="969" width="1" height="2" fill="#ffee88"/><rect x="103" y="971" width="3" height="2" fill="#ffee88"/>
<text x="527" y="970" textLength="96" lengthAdjust="spacingAndGlyphs">UniRef100_P06671</text>
<rect x="116" y="977" width="396" height="3" fill="#00cccc"/>
<rect x="115" y="974" width="1" height="9" fill="#fff"/>
<path d="M512.5 973.5L517.5 978.5L512.5 983.5Z" fill="#00cccc" stroke="#fff" stroke-width="1"/>
<text x="527" y="981" textLength="96" lengthAdjust="spacingAndGlyphs">UniRef100_Q40961</text>
<rect x="10" y="988" width="517" height="3" fill="#000033"/>
<rect x="116" y="988" width="396" height="3" fill="#00cccc"/>
<rect x="115" y="985" width="1" height="9" fill="#fff"/>
<path d="M512.5 984.5L517.5 989.5L512.5 994.5Z" fill="#00cccc" stroke="#fff" stroke-width="1"/>
<text x="527" y="992" textLength="96" lengthAdjust="spacingAndGlyphs">UniRef100_Q39831</text>
<rect x="79" y="999" width="433" height="3" fill="#00cccc"/>
<rect x="78" y="996" width="1" height="9" fill="#fff"/>
<path d="M512.5 995.5L517.5 1000.5L512.5 1005.5Z" fill="#00cccc" stroke="#fff" stroke-width="1"/>
<rect x="92" y="1002" width="1" height="2" fill="#ffee88"/><rect x="91" y="1004" width="3" height="2" fill="#ffee88"/>
<text x="527" y="1003" textLength="96" lengthAdjust="spacingAndGlyphs">UniRef100_Q1EPK5</text>
<rect x="10" y="1010" width="517" height="3" fill="#000033"/>
<rect x="18" y="1010" width="494" height="3" fill="#00a000"/>
<rect x="17" y="1007" width="1" height="9" fill="#fff"/>
<path d="M512.5 1006.5L517.5 1011.5L512.5 1016.5Z" fill="#00a000" stroke="#fff" stroke-width="1"/>
<rect x="51" y="1013" width="1" height="2" fill="#ffee88"/><rect x="50" y="1015" width="3" height="2" fill="#ffee88"/>
<text x="527" y="1014" textLength="96" lengthAdjust="spacingAndGlyphs">UniRef100_P15195</text>
<rect x="116" y="1021" width="396" height="3" fill="#00cccc"/>
<rect x="115" y="1018" width="1" height="9" fill="#fff"/>
<path d="M512.5 1017.5L517.5 1022.5L512.5 1027.5Z" fill="#00cccc" stroke="#fff" stroke-width="1"/>
<text x="527" y="1025" textLength="96" lengthAdjust="spacingAndGlyphs">UniRef100_P12332</text>
<rect x="10" y="1032" width="517" height="3" fill="#000033"/>
<rect x="48" y="1032" width="464" height="3" fill="#00cccc"/>
<rect x="47" y="1029" width="1" height="9" fill="#fff"/>
<path d="M512.5 1028.5L517.5 1033.5L512.5 1038.5Z" fill="#00cccc" stroke="#fff" stroke-width="1"/>
<text x="527" y="1036" textLength="96" lengthAdjust="spacingAndGlyphs">UniRef100_C5X7M3</text>
<rect x="116" y="1043" width="396" height="3" fill="#00cccc"/>
<rect x="115" y="1040" width="1" height="9" fill="#fff"/>
<path d="M512.5 1039.5L517.5 1044.5L512.5 1049.5Z" fill="#00cccc" stroke="#fff" stroke-width="1"/>
<text x="527" y="1047" textLength="96" lengthAdjust="spacingAndGlyphs">UniRef100_Q9LKI0</text>
<rect x="10" y="1054" width="517" height="3" fill="#000033"/>
<rect x="116" y="1054" width="396" height="3" fill="#00cccc"/>
<rect x="115" y="1051" width="1" height="9" fill="#fff"/>
<path d="M512.5 1050.5L517.5 1055.5L512.5 1060.5Z" fill="#00cccc" stroke="#fff" stroke-width="1"/>
<text x="527" y="1058" textLength="96" lengthAdjust="spacingAndGlyphs">UniRef100_Q84U94</text>
<rect x="116" y="1065" width="396" height="3" fill="#00cccc"/>
<rect x="115" y="1062" width="1" height="9" fill="#fff"/>
<path d="M512.5 1061.5L517.5 1066.5L512.5 1071.5Z" fill="#00cccc" stroke="#fff" stroke-width="1"/>
<text x="527" y="1069" textLength="96" lengthAdjust="spacingAndGlyphs">UniRef100_B9SF47</text>
<rect x="10" y="1076" width="517" height="3" fill="#000033"/>
<rect x="97" y="1076" width="415" height="3" fill="#00cccc"/>
<rect x="96" y="1073" width="1" height="9" fill="#fff"/>
<path d="M512.5 1072.5L517.5 1077.5L512.5 1082.5Z" fill="#00cccc" stroke="#fff" stroke-width="1"/>
<text x="527" y="1080" textLength="96" lengthAdjust="spacingAndGlyphs">UniRef100_A7QQL7</text>
<rect x="97" y="1087" width="415" height="3" fill="#00cccc"/>
<rect x="96" y="1084" width="1" height="9" fill="#fff"/>
<path d="M512.5 1083.5L517.5 1088.5L512.5 1093.5Z" fill="#00cccc" stroke="#fff" stroke-width="1"/>
<text x="527" y="1091" textLength="96" lengthAdjust="spacingAndGlyphs">UniRef100_A5BAI4</text>
<rect x="10" y="1098" width="517" height="3" fill="#000033"/>
<rect x="97" y="1098" width="415" height="3" fill="#00cccc"/>
<rect x="96" y="1095" width="1" height="9" fill="#fff"/>
<path d="M512.5 1094.5L517.5 1099.5L512.5 1104.5Z" fill="#00cccc" stroke="#fff" stroke-width="1"/>
<text x="527" y="1102" textLength="96" lengthAdjust="spacingAndGlyphs">UniRef100_A5B5I4</text>
<rect x="116" y="1109" width="396" height="3" fill="#00cccc"/>
<rect x="115" y="1106" width="1" height="9" fill="#fff"/>
<path d="M512.5 1105.5L517.5 1110.5L512.5 1115.5Z" fill="#00cccc" stroke="#fff" stroke-width="1"/>
<text x="527" y="1113" textLength="96" lengthAdjust="spacingAndGlyphs">UniRef100_Q38713</text>
<rect x="10" y="1120" width="517" height="3" fill="#000033"/>
<rect x="116" y="1120" width="396" height="3" fill="#00cccc"/>
<rect x="115" y="1117" width="1" height="9" fill="#fff"/>
<path d="M512.5 1116.5L517.5 1121.5L512.5 1126.5Z" fill="#00cccc" stroke="#fff" stroke-width="1"/>
<text x="527" y="1124" textLength="96" lengthAdjust="spacingAndGlyphs">UniRef100_C6TM32</text>
<rect x="30" y="1131" width="18" height="3" fill="#00a000"/>
<rect x="48" y="1131" width="4" height="3" fill="#000"/><rect x="48" y="1132" width="4" height="1" fill="#00a000"/>
<rect x="52" y="1131" width="460" height="3" fill="#00a000"/>
<rect x="29" y="1128" width="1" height="9" fill="#fff"/>
<path d="M512.5 1127.5L517.5 1132.5L512.5 1137.5Z" fill="#00a000" stroke="#fff" stroke-width="1"/>
<rect x="38" y="1134" width="1" height="2" fill="#ffee88"/><rect x="37" y="1136" width="3" height="2" fill="#ffee88"/>
<text x="527" y="1135" textLength="96" lengthAdjust="spacingAndGlyphs">UniRef100_C5IFT7</text>
<rect x="10" y="1142" width="517" height="3" fill="#000033"/>
<rect x="116" y="1142" width="396" height="3" fill="#00cccc"/>
<rect x="115" y="1139" width="1" height="9" fill="#fff"/>
<path d="M512.5 1138.5L517.5 1143.5L512.5 1148.5Z" fill="#00cccc" stroke="#fff" stroke-width="1"/>
<text x="527" y="1146" textLength="96" lengthAdjust="spacingAndGlyphs">UniRef100_A3F6K2</text>
<rect x="116" y="1153" width="396" height="3" fill="#00cccc"/>
<rect x="115" y="1150" width="1" height="9" fill="#fff"/>
<path d="M512.5 1149.5L517.5 1154.5L512.5 1159.5Z" fill="#00cccc" stroke="#fff" stroke-width="1"/>
<text x="527" y="1157" textLength="96" lengthAdjust="spacingAndGlyphs">UniRef100_P27490</text>
<rect x="10" y="1164" width="517" height="3" fill="#000033"/>
<rect x="116" y="1164" width="396" height="3" fill="#00cccc"/>
<rect x="115" y="1161" width="1" height="9" fill="#fff"/>
<path d="M512.5 1160.5L517.5 1165.5L512.5 1170.5Z" fill="#00cccc" stroke="#fff" stroke-width="1"/>
<text x="527" y="1168" textLength="96" lengthAdjust="spacingAndGlyphs">UniRef100_P07371</text>
<rect x="116" y="1175" width="396" height="3" fill="#00cccc"/>
<rect x="115" y="1172" width="1" height="9" fill="#fff"/>
<path d="M512.5 1171.5L517.5 1176.5L512.5 1181.5Z" fill="#00cccc" stroke="#fff" stroke-width="1"/>
<text x="527" y="1179" textLength="96" lengthAdjust="spacingAndGlyphs">UniRef100_P12328</text>
<rect x="10" y="1186" width="517" height="3" fill="#000033"/>
<rect x="116" y="1186" width="396" height="3" fill="#00cccc"/>
<rect x="115" y="1183" width="1" height="9" fill="#fff"/>
<path d="M512.5 1182.5L517.5 1187.5L512.5 1192.5Z" fill="#00cccc" stroke="#fff" stroke-width="1"/>
<text x="527" y="1190" textLength="96" lengthAdjust="spacingAndGlyphs">UniRef100_P08221</text>
<rect x="116" y="1197" width="396" height="3" fill="#00cccc"/>
<rect x="115" y="1194" width="1" height="9" fill="#fff"/>
<path d="M512.5 1193.5L517.5 1198.5L512.5 1203.5Z" fill="#00cccc" stroke="#fff" stroke-width="1"/>
<text x="527" y="1201" textLength="96" lengthAdjust="spacingAndGlyphs">UniRef100_Q49812</text>
<rect x="10" y="1208" width="517" height="3" fill="#000033"/>
<rect x="48" y="1208" width="464" height="3" fill="#00a000"/>
<rect x="47" y="1205" width="1" height="9" fill="#fff"/>
<path d="M512.5 1204.5L517.5 1209.5L512.5 1214.5Z" fill="#00a000" stroke="#fff" stroke-width="1"/>
<text x="527" y="1212" textLength="96" lengthAdjust="spacingAndGlyphs">UniRef100_O04685</text>
<rect x="116" y="1219" width="396" height="3" fill="#00cccc"/>
<rect x="115" y="1216" width="1" height="9" fill="#fff"/>
<path d="M512.5 1215.5L517.5 1220.5L512.5 1225.5Z" fill="#00cccc" stroke="#fff" stroke-width="1"/>
<text x="527" y="1223" textLength="96" lengthAdjust="spacingAndGlyphs">UniRef100_C0PAQ4</text>
<rect x="10" y="1230" width="517" height="3" fill="#000033"/>
<rect x="116" y="1230" width="396" height="3" fill="#00cccc"/>
<rect x="115" y="1227" width="1" height="9" fill="#fff"/>
<path d="M512.5 1226.5L517.5 1231.5L512.5 1236.5Z" fill="#00cccc" stroke="#fff" stroke-width="1"/>
<text x="527" y="1234" textLength="96" lengthAdjust="spacingAndGlyphs">UniRef100_B9S155</text>
<rect x="116" y="1241" width="396" height="3" fill="#00cccc"/>
<rect x="115" y="1238" width="1" height="9" fill="#fff"/>
<path d="M512.5 1237.5L517.5 1242.5L512.5 1247.5Z" fill="#00cccc" stroke="#fff" stroke-width="1"/>
<text x="527" y="1245" textLength="96" lengthAdjust="spacingAndGlyphs">UniRef100_B0L0Y2</text>
<rect x="10" y="1252" width="517" height="3" fill="#000033"/>
<rect x="116" y="1252" width="396" height="3" fill="#00cccc"/>
<rect x="115" y="1249" width="1" height="9" fill="#fff"/>
<path d="M512.5 1248.5L517.5 1253.5L512.5 1258.5Z" fill="#00cccc" stroke="#fff" stroke-width="1"/>
<text x="527" y="1256" textLength="96" lengthAdjust="spacingAndGlyphs">UniRef100_A9NLB8</text>
<rect x="116" y="1263" width="396" height="3" fill="#00cccc"/>
<rect x="115" y="1260" width="1" height="9" fill="#fff"/>
<path d="M512.5 1259.5L517.5 1264.5L512.5 1269.5Z" fill="#00cccc" stroke="#fff" stroke-width="1"/>
<text x="527" y="1267" textLength="96" lengthAdjust="spacingAndGlyphs">UniRef100_A9NL12</text>
<rect x="10" y="1274" width="517" height="3" fill="#000033"/>
<rect x="116" y="1274" width="396" height="3" fill="#00cccc"/>
<rect x="115" y="1271" width="1" height="9" fill="#fff"/>
<path d="M512.5 1270.5L517.5 1275.5L512.5 1280.5Z" fill="#00cccc" stroke="#fff" stroke-width="1"/>
<text x="527" y="1278" textLength="96" lengthAdjust="spacingAndGlyphs">UniRef100_P12329</text>
<rect x="116" y="1285" width="396" height="3" fill="#00cccc"/>
<rect x="115" y="1282" width="1" height="9" fill="#fff"/>
<path d="M512.5 1281.5L517.5 1286.5L512.5 1291.5Z" fill="#00cccc" stroke="#fff" stroke-width="1"/>
<text x="527" y="1289" textLength="96" lengthAdjust="spacingAndGlyphs">UniRef100_Q677F6</text>
<rect x="10" y="1296" width="517" height="3" fill="#000033"/>
<rect x="116" y="1296" width="396" height="3" fill="#00cccc"/>
<rect x="115" y="1293" width="1" height="9" fill="#fff"/>
<path d="M512.5 1292.5L517.5 1297.5L512.5 1302.5Z" fill="#00cccc" stroke="#fff" stroke-width="1"/>
<text x="527" y="1300" textLength="96" lengthAdjust="spacingAndGlyphs">UniRef100_Q10HC8</text>
<rect x="97" y="1307" width="415" height="3" fill="#00cccc"/>
<rect x="96" y="1304" width="1" height="9" fill="#fff"/>
<path d="M512.5 1303.5L517.5 1308.5L512.5 1313.5Z" fill="#00cccc" stroke="#fff" stroke-width="1"/>
<rect x="104" y="1310" width="1" height="2" fill="#ffee88"/><rect x="103" y="1312" width="3" height="2" fill="#ffee88"/>
<text x="527" y="1311" textLength="96" lengthAdjust="spacingAndGlyphs">UniRef100_B4FUA1</text>
<rect x="10" y="1318" width="517" height="3" fill="#000033"/>
<rect x="116" y="1318" width="396" height="3" fill="#00cccc"/>
<rect x="115" y="1315" width="1" height="9" fill="#fff"/>
<path d="M512.5 1314.5L517.5 1319.5L512.5 1324.5Z" fill="#00cccc" stroke="#fff" stroke-width="1"/>
<text x="527" y="1322" textLength="96" lengthAdjust="spacingAndGlyphs">UniRef100_A9NPD6</text>
<rect x="116" y="1329" width="396" height="3" fill="#00cccc"/>
<rect x="115" y="1326" width="1" height="9" fill="#fff"/>
<path d="M512.5 1325.5L517.5 1330.5L512.5 1335.5Z" fill="#00cccc" stroke="#fff" stroke-width="1"/>
<text x="527" y="1333" textLength="96" lengthAdjust="spacingAndGlyphs">UniRef100_A9NMJ8</text>
<rect x="10" y="1340" width="517" height="3" fill="#000033"/>
<rect x="116" y="1340" width="396" height="3" fill="#00cccc"/>
<rect x="115" y="1337" width="1" height="9" fill="#fff"/>
<path d="M512.5 1336.5L517.5 1341.5L512.5 1346.5Z" fill="#00cccc" stroke="#fff" stroke-width="1"/>
<text x="527" y="1344" textLength="96" lengthAdjust="spacingAndGlyphs">UniRef100_Q10HD0</text>
<rect x="97" y="1351" width="415" height="3" fill="#00cccc"/>
<rect x="96" y="1348" width="1" height="9" fill="#fff"/>
<path d="M512.5 1347.5L517.5 1352.5L512.5 1357.5Z" fill="#00cccc" stroke="#fff" stroke-width="1"/>
<text x="527" y="1355" textLength="96" lengthAdjust="spacingAndGlyphs">UniRef100_Q41423</text>
<rect x="10" y="1362" width="517" height="3" fill="#000033"/>
<rect x="116" y="1362" width="396" height="3" fill="#00cccc"/>
<rect x="115" y="1359" width="1" height="9" fill="#fff"/>
<path d="M512.5 1358.5L517.5 1363.5L512.5 1368.5Z" fill="#00cccc" stroke="#fff" stroke-width="1"/>
<text x="527" y="1366" textLength="96" lengthAdjust="spacingAndGlyphs">UniRef100_Q40956</text>
<rect x="116" y="1373" width="396" height="3" fill="#00cccc"/>
<rect x="115" y="1370" width="1" height="9" fill="#fff"/>
<path d="M512.5 1369.5L517.5 1374.5L512.5 1379.5Z" fill="#00cccc" stroke="#fff" stroke-width="1"/>
<text x="527" y="1377" textLength="96" lengthAdjust="spacingAndGlyphs">UniRef100_O04687</text>
<rect x="10" y="1384" width="517" height="3" fill="#000033"/>
<rect x="116" y="1384" width="396" height="3" fill="#00cccc"/>
<rect x="115" y="1381" width="1" height="9" fill="#fff"/>
<path d="M512.5 1380.5L517.5 1385.5L512.5 1390.5Z" fill="#00cccc" stroke="#fff" stroke-width="1"/>
<text x="527" y="1388" textLength="96" lengthAdjust="spacingAndGlyphs">UniRef100_O04686</text>
<rect x="116" y="1395" width="396" height="3" fill="#00cccc"/>
<rect x="115" y="1392" width="1" height="9" fill="#fff"/>
<path d="M512.5 1391.5L517.5 1396.5L512.5 1401.5Z" fill="#00cccc" stroke="#fff" stroke-width="1"/>
<text x="527" y="1399" textLength="96" lengthAdjust="spacingAndGlyphs">UniRef100_C5XQ83</text>
<rect x="10" y="1406" width="517" height="3" fill="#000033"/>
<rect x="116" y="1406" width="396" height="3" fill="#00cccc"/>
<rect x="115" y="1403" width="1" height="9" fill="#fff"/>
<path d="M512.5 1402.5L517.5 1407.5L512.5 1412.5Z" fill="#00cccc" stroke="#fff" stroke-width="1"/>
<text x="527" y="1410" textLength="96" lengthAdjust="spacingAndGlyphs">UniRef100_C5XQ82</text>
<rect x="116" y="1417" width="396" height="3" fill="#00cccc"/>
<rect x="115" y="1414" width="1" height="9" fill="#fff"/>
<path d="M512.5 1413.5L517.5 1418.5L512.5 1423.5Z" fill="#00cccc" stroke="#fff" stroke-width="1"/>
<text x="527" y="1421" textLength="96" lengthAdjust="spacingAndGlyphs">UniRef100_C5WTC1</text>
<rect x="10" y="1428" width="517" height="3" fill="#000033"/>
<rect x="116" y="1428" width="396" height="3" fill="#00cccc"/>
<rect x="115" y="1425" width="1" height="9" fill="#fff"/>
<path d="M512.5 1424.5L517.5 1429.5L512.5 1434.5Z" fill="#00cccc" stroke="#fff" stroke-width="1"/>
<text x="527" y="1432" textLength="96" lengthAdjust="spacingAndGlyphs">UniRef100_C0L2S1</text>
<rect x="116" y="1439" width="396" height="3" fill="#00cccc"/>
<rect x="115" y="1436" width="1" height="9" fill="#fff"/>
<path d="M512.5 1435.5L517.5 1440.5L512.5 1445.5Z" fill="#00cccc" stroke="#fff" stroke-width="1"/>
<text x="527" y="1443" textLength="96" lengthAdjust="spacingAndGlyphs">UniRef100_B6T1H1</text>
<rect x="10" y="1450" width="517" height="3" fill="#000033"/>
<rect x="116" y="1450" width="396" height="3" fill="#00cccc"/>
<rect x="115" y="1447" width="1" height="9" fill="#fff"/>
<path d="M512.5 1446.5L517.5 1451.5L512.5 1456.5Z" fill="#00cccc" stroke="#fff" stroke-width="1"/>
<text x="527" y="1454" textLength="96" lengthAdjust="spacingAndGlyphs">UniRef100_B6SZT9</text>
<rect x="116" y="1461" width="396" height="3" fill="#00cccc"/>
<rect x="115" y="1458" width="1" height="9" fill="#fff"/>
<path d="M512.5 1457.5L517.5 1462.5L512.5 1467.5Z" fill="#00cccc" stroke="#fff" stroke-width="1"/>
<text x="527" y="1465" textLength="96" lengthAdjust="spacingAndGlyphs">UniRef100_P92919</text>
<rect x="10" y="1472" width="517" height="3" fill="#000033"/>
<rect x="116" y="1472" width="396" height="3" fill="#00cccc"/>
<rect x="115" y="1469" width="1" height="9" fill="#fff"/>
<path d="M512.5 1468.5L517.5 1473.5L512.5 1478.5Z" fill="#00cccc" stroke="#fff" stroke-width="1"/>
<text x="527" y="1476" textLength="96" lengthAdjust="spacingAndGlyphs">UniRef100_Q9SWE9</text>
<rect x="97" y="1483" width="415" height="3" fill="#00cccc"/>
<rect x="96" y="1480" width="1" height="9" fill="#fff"/>
<path d="M512.5 1479.5L517.5 1484.5L512.5 1489.5Z" fill="#00cccc" stroke="#fff" stroke-width="1"/>
<text x="527" y="1487" textLength="96" lengthAdjust="spacingAndGlyphs">UniRef100_Q41424</text>
<rect x="10" y="1494" width="517" height="3" fill="#000033"/>
<rect x="97" y="1494" width="415" height="3" fill="#00cccc"/>
<rect x="96" y="1491" width="1" height="9" fill="#fff"/>
<path d="M512.5 1490.5L517.5 1495.5L512.5 1500.5Z" fill="#00cccc" stroke="#fff" stroke-width="1"/>
<text x="527" y="1498" textLength="96" lengthAdjust="spacingAndGlyphs">UniRef100_Q41422</text>
<rect x="97" y="1505" width="415" height="3" fill="#00cccc"/>
<rect x="96" y="1502" width="1" height="9" fill="#fff"/>
<path d="M512.5 1501.5L517.5 1506.5L512.5 1511.5Z" fill="#00cccc" stroke="#fff" stroke-width="1"/>
<text x="527" y="1509" textLength="96" lengthAdjust="spacingAndGlyphs">UniRef100_Q41421</text>
<rect x="10" y="1516" width="517" height="3" fill="#000033"/>
<rect x="116" y="1516" width="396" height="3" fill="#00cccc"/>
<rect x="115" y="1513" width="1" height="9" fill="#fff"/>
<path d="M512.5 1512.5L517.5 1517.5L512.5 1522.5Z" fill="#00cccc" stroke="#fff" stroke-width="1"/>
<text x="527" y="1520" textLength="96" lengthAdjust="spacingAndGlyphs">UniRef100_Q40934</text>
<rect x="97" y="1527" width="415" height="3" fill="#00cccc"/>
<rect x="96" y="1524" width="1" height="9" fill="#fff"/>
<path d="M512.5 1523.5L517.5 1528.5L512.5 1533.5Z" fill="#00cccc" stroke="#fff" stroke-width="1"/>
<text x="527" y="1531" textLength="96" lengthAdjust="spacingAndGlyphs">UniRef100_B8XLF1</text>
<rect x="10" y="1538" width="517" height="3" fill="#000033"/>
<rect x="116" y="1538" width="396" height="3" fill="#00cccc"/>
<rect x="115" y="1535" width="1" height="9" fill="#fff"/>
<path d="M512.5 1534.5L517.5 1539.5L512.5 1544.5Z" fill="#00cccc" stroke="#fff" stroke-width="1"/>
<text x="527" y="1542" textLength="96" lengthAdjust="spacingAndGlyphs">UniRef100_A9NP21</text>
<rect x="97" y="1549" width="415" height="3" fill="#00cccc"/>
<rect x="96" y="1546" width="1" height="9" fill="#fff"/>
<path d="M512.5 1545.5L517.5 1550.5L512.5 1555.5Z" fill="#00cccc" stroke="#fff" stroke-width="1"/>
<rect x="104" y="1552" width="1" height="2" fill="#ffee88"/><rect x="103" y="1554" width="3" height="2" fill="#ffee88"/>
<text x="527" y="1553" textLength="96" lengthAdjust="spacingAndGlyphs">UniRef100_Q8W0E6</text>
<rect x="10" y="1560" width="517" height="3" fill="#000033"/>
<rect x="97" y="1560" width="415" height="3" fill="#00cccc"/>
<rect x="96" y="1557" width="1" height="9" fill="#fff"/>
<path d="M512.5 1556.5L517.5 1561.5L512.5 1566.5Z" fill="#00cccc" stroke="#fff" stroke-width="1"/>
<text x="527" y="1564" textLength="96" lengthAdjust="spacingAndGlyphs">UniRef100_P07370</text>
<rect x="116" y="1571" width="396" height="3" fill="#00cccc"/>
<rect x="115" y="1568" width="1" height="9" fill="#fff"/>
<path d="M512.5 1567.5L517.5 1572.5L512.5 1577.5Z" fill="#00cccc" stroke="#fff" stroke-width="1"/>
<text x="527" y="1575" textLength="96" lengthAdjust="spacingAndGlyphs">UniRef100_Q50K58</text>
<rect x="10" y="1582" width="517" height="3" fill="#000033"/>
<rect x="116" y="1582" width="396" height="3" fill="#00cccc"/>
<rect x="115" y="1579" width="1" height="9" fill="#fff"/>
<path d="M512.5 1578.5L517.5 1583.5L512.5 1588.5Z" fill="#00cccc" stroke="#fff" stroke-width="1"/>
<text x="527" y="1586" textLength="96" lengthAdjust="spacingAndGlyphs">UniRef100_Q3LFQ5</text>
<rect x="116" y="1593" width="396" height="3" fill="#00cccc"/>
<rect x="115" y="1590" width="1" height="9" fill="#fff"/>
<path d="M512.5 1589.5L517.5 1594.5L512.5 1599.5Z" fill="#00cccc" stroke="#fff" stroke-width="1"/>
<text x="527" y="1597" textLength="96" lengthAdjust="spacingAndGlyphs">UniRef100_Q14K89</text>
<rect x="10" y="1604" width="517" height="3" fill="#000033"/>
<rect x="116" y="1604" width="396" height="3" fill="#00cccc"/>
<rect x="115" y="1601" width="1" height="9" fill="#fff"/>
<path d="M512.5 1600.5L517.5 1605.5L512.5 1610.5Z" fill="#00cccc" stroke="#fff" stroke-width="1"/>
<text x="527" y="1608" textLength="96" lengthAdjust="spacingAndGlyphs">UniRef100_C1K5B9</text>
<rect x="116" y="1615" width="396" height="3" fill="#00cccc"/>
<rect x="115" y="1612" width="1" height="9" fill="#fff"/>
<path d="M512.5 1611.5L517.5 1616.5L512.5 1621.5Z" fill="#00cccc" stroke="#fff" stroke-width="1"/>
<text x="527" y="1619" textLength="96" lengthAdjust="spacingAndGlyphs">UniRef100_C1K5B6</text>
<rect x="10" y="1626" width="517" height="3" fill="#000033"/>
<rect x="116" y="1626" width="396" height="3" fill="#00cccc"/>
<rect x="115" y="1623" width="1" height="9" fill="#fff"/>
<path d="M512.5 1622.5L517.5 1627.5L512.5 1632.5Z" fill="#00cccc" stroke="#fff" stroke-width="1"/>
<text x="527" y="1630" textLength="96" lengthAdjust="spacingAndGlyphs">UniRef100_B6STN4</text>
<rect x="116" y="1637" width="396" height="3" fill="#00cccc"/>
<rect x="115" y="1634" width="1" height="9" fill="#fff"/>
<path d="M512.5 1633.5L517.5 1638.5L512.5 1643.5Z" fill="#00cccc" stroke="#fff" stroke-width="1"/>
<text x="527" y="1641" textLength="96" lengthAdjust="spacingAndGlyphs">UniRef100_A9PJH7</text>
<rect x="10" y="1648" width="517" height="3" fill="#000033"/>
<rect x="116" y="1648" width="396" height="3" fill="#00cccc"/>
<rect x="115" y="1645" width="1" height="9" fill="#fff"/>
<path d="M512.5 1644.5L517.5 1649.5L512.5 1654.5Z" fill="#00cccc" stroke="#fff" stroke-width="1"/>
<text x="527" y="1652" textLength="96" lengthAdjust="spacingAndGlyphs">UniRef100_A9PFW7</text>
<rect x="97" y="1659" width="415" height="3" fill="#00cccc"/>
<rect x="96" y="1656" width="1" height="9" fill="#fff"/>
<path d="M512.5 1655.5L517.5 1660.5L512.5 1665.5Z" fill="#00cccc" stroke="#fff" stroke-width="1"/>
<rect x="104" y="1662" width="1" height="2" fill="#ffee88"/><rect x="103" y="1664" width="3" height="2" fill="#ffee88"/>
<text x="527" y="1663" textLength="96" lengthAdjust="spacingAndGlyphs">UniRef100_P12330</text>
<rect x="10" y="1670" width="517" height="3" fill="#000033"/>
<rect x="27" y="1670" width="20" height="3" fill="#00a000"/>
<rect x="47" y="1670" width="3" height="3" fill="#000"/><rect x="47" y="1671" width="3" height="1" fill="#00a000"/>
<rect x="50" y="1670" width="462" height="3" fill="#00a000"/>
<rect x="26" y="1667" width="1" height="9" fill="#fff"/>
<path d="M512.5 1666.5L517.5 1671.5L512.5 1676.5Z" fill="#00a000" stroke="#fff" stroke-width="1"/>
<text x="527" y="1674" textLength="96" lengthAdjust="spacingAndGlyphs">UniRef100_Q8W159</text>
<rect x="116" y="1681" width="396" height="3" fill="#00cccc"/>
<rect x="115" y="1678" width="1" height="9" fill="#fff"/>
<path d="M512.5 1677.5L517.5 1682.5L512.5 1687.5Z" fill="#00cccc" stroke="#fff" stroke-width="1"/>
<text x="527" y="1685" textLength="96" lengthAdjust="spacingAndGlyphs">UniRef100_Q5ZF93</text>
<rect x="10" y="1692" width="517" height="3" fill="#000033"/>
<rect x="116" y="1692" width="396" height="3" fill="#00cccc"/>
<rect x="115" y="1689" width="1" height="9" fill="#fff"/>
<path d="M512.5 1688.5L517.5 1693.5L512.5 1698.5Z" fill="#00cccc" stroke="#fff" stroke-width="1"/>
<text x="527" y="1696" textLength="96" lengthAdjust="spacingAndGlyphs">UniRef100_Q40185</text>
<rect x="116" y="1703" width="396" height="3" fill="#00cccc"/>
<rect x="115" y="1700" width="1" height="9" fill="#fff"/>
<path d="M512.5 1699.5L517.5 1704.5L512.5 1709.5Z" fill="#00cccc" stroke="#fff" stroke-width="1"/>
<text x="527" y="1707" textLength="96" lengthAdjust="spacingAndGlyphs">UniRef100_B8LPT5</text>
<rect x="10" y="1714" width="517" height="3" fill="#000033"/>
<rect x="116" y="1714" width="396" height="3" fill="#00cccc"/>
<rect x="115" y="1711" width="1" height="9" fill="#fff"/>
<path d="M512.5 1710.5L517.5 1715.5L512.5 1720.5Z" fill="#00cccc" stroke="#fff" stroke-width="1"/>
<text x="527" y="1718" textLength="96" lengthAdjust="spacingAndGlyphs">UniRef100_A4F3R4</text>
<rect x="110" y="1725" width="402" height="3" fill="#00cccc"/>
<rect x="109" y="1722" width="1" height="9" fill="#fff"/>
<path d="M512.5 1721.5L517.5 1726.5L512.5 1731.5Z" fill="#00cccc" stroke="#fff" stroke-width="1"/>
<text x="527" y="1729" textLength="96" lengthAdjust="spacingAndGlyphs">UniRef100_A2SY36</text>
<rect x="10" y="1736" width="517" height="3" fill="#000033"/>
<rect x="27" y="1736" width="20" height="3" fill="#00a000"/>
<rect x="47" y="1736" width="3" height="3" fill="#000"/><rect x="47" y="1737" width="3" height="1" fill="#00a000"/>
<rect x="50" y="1736" width="462" height="3" fill="#00a000"/>
<rect x="26" y="1733" width="1" height="9" fill="#fff"/>
<path d="M512.5 1732.5L517.5 1737.5L512.5 1742.5Z" fill="#00a000" stroke="#fff" stroke-width="1"/>
<text x="527" y="1740" textLength="96" lengthAdjust="spacingAndGlyphs">UniRef100_P13851</text>
<rect x="116" y="1747" width="396" height="3" fill="#00cccc"/>
<rect x="115" y="1744" width="1" height="9" fill="#fff"/>
<path d="M512.5 1743.5L517.5 1748.5L512.5 1753.5Z" fill="#00cccc" stroke="#fff" stroke-width="1"/>
<text x="527" y="1751" textLength="96" lengthAdjust="spacingAndGlyphs">UniRef100_Q9ZSJ4</text>
<rect x="10" y="1758" width="517" height="3" fill="#000033"/>
<rect x="116" y="1758" width="396" height="3" fill="#00cccc"/>
<rect x="115" y="1755" width="1" height="9" fill="#fff"/>
<path d="M512.5 1754.5L517.5 1759.5L512.5 1764.5Z" fill="#00cccc" stroke="#fff" stroke-width="1"/>
<text x="527" y="1762" textLength="96" lengthAdjust="spacingAndGlyphs">UniRef100_Q19UF9</text>
<rect x="116" y="1769" width="396" height="3" fill="#00cccc"/>
<rect x="115" y="1766" width="1" height="9" fill="#fff"/>
<path d="M512.5 1765.5L517.5 1770.5L512.5 1775.5Z" fill="#00cccc" stroke="#fff" stroke-width="1"/>
<text x="527" y="1773" textLength="96" lengthAdjust="spacingAndGlyphs">UniRef100_O64449</text>
<rect x="10" y="1780" width="517" height="3" fill="#000033"/>
<rect x="116" y="1780" width="396" height="3" fill="#00cccc"/>
<rect x="115" y="1777" width="1" height="9" fill="#fff"/>
<path d="M512.5 1776.5L517.5 1781.5L512.5 1786.5Z" fill="#00cccc" stroke="#fff" stroke-width="1"/>
<text x="527" y="1784" textLength="96" lengthAdjust="spacingAndGlyphs">UniRef100_O64447</text>
<rect x="116" y="1791" width="396" height="3" fill="#00cccc"/>
<rect x="115" y="1788" width="1" height="9" fill="#fff"/>
<path d="M512.5 1787.5L517.5 1792.5L512.5 1797.5Z" fill="#00cccc" stroke="#fff" stroke-width="1"/>
<text x="527" y="1795" textLength="96" lengthAdjust="spacingAndGlyphs">UniRef100_O64445</text>
<rect x="10" y="1802" width="517" height="3" fill="#000033"/>
<rect x="116" y="1802" width="396" height="3" fill="#00cccc"/>
<rect x="115" y="1799" width="1" height="9" fill="#fff"/>
<path d="M512.5 1798.5L517.5 1803.5L512.5 1808.5Z" fill="#00cccc" stroke="#fff" stroke-width="1"/>
<text x="527" y="1806" textLength="96" lengthAdjust="spacingAndGlyphs">UniRef100_O24401</text>
<rect x="116" y="1813" width="396" height="3" fill="#00cccc"/>
<rect x="115" y="1810" width="1" height="9" fill="#fff"/>
<path d="M512.5 1809.5L517.5 1814.5L512.5 1819.5Z" fill="#00cccc" stroke="#fff" stroke-width="1"/>
<text x="527" y="1817" textLength="96" lengthAdjust="spacingAndGlyphs">UniRef100_D0F1Q5</text>
<rect x="10" y="1824" width="517" height="3" fill="#000033"/>
<rect x="116" y="1824" width="396" height="3" fill="#00cccc"/>
<rect x="115" y="1821" width="1" height="9" fill="#fff"/>
<path d="M512.5 1820.5L517.5 1825.5L512.5 1830.5Z" fill="#00cccc" stroke="#fff" stroke-width="1"/>
<text x="527" y="1828" textLength="96" lengthAdjust="spacingAndGlyphs">UniRef100_A5ASG6</text>
<rect x="116" y="1835" width="396" height="3" fill="#00cccc"/>
<rect x="115" y="1832" width="1" height="9" fill="#fff"/>
<path d="M512.5 1831.5L517.5 1836.5L512.5 1841.5Z" fill="#00cccc" stroke="#fff" stroke-width="1"/>
<text x="527" y="1839" textLength="96" lengthAdjust="spacingAndGlyphs">UniRef100_A4F3R3</text>
<rect x="10" y="1846" width="517" height="3" fill="#000033"/>
<rect x="116" y="1846" width="396" height="3" fill="#00cccc"/>
<rect x="115" y="1843" width="1" height="9" fill="#fff"/>
<path d="M512.5 1842.5L517.5 1847.5L512.5 1852.5Z" fill="#00cccc" stroke="#fff" stroke-width="1"/>
<text x="527" y="1850" textLength="96" lengthAdjust="spacingAndGlyphs">UniRef100_P27491</text>
<rect x="116" y="1857" width="396" height="3" fill="#00cccc"/>
<rect x="115" y="1854" width="1" height="9" fill="#fff"/>
<path d="M512.5 1853.5L517.5 1858.5L512.5 1863.5Z" fill="#00cccc" stroke="#fff" stroke-width="1"/>
<text x="527" y="1861" textLength="96" lengthAdjust="spacingAndGlyphs">UniRef100_P27493</text>
<rect x="10" y="1868" width="517" height="3" fill="#000033"/>
<rect x="116" y="1868" width="396" height="3" fill="#00cccc"/>
<rect x="115" y="1865" width="1" height="9" fill="#fff"/>
<path d="M512.5 1864.5L517.5 1869.5L512.5 1874.5Z" fill="#00cccc" stroke="#fff" stroke-width="1"/>
<text x="527" y="1872" textLength="96" lengthAdjust="spacingAndGlyphs">UniRef100_Q9XQB3</text>
<rect x="116" y="1879" width="396" height="3" fill="#00cccc"/>
<rect x="115" y="1876" width="1" height="9" fill="#fff"/>
<path d="M512.5 1875.5L517.5 1880.5L512.5 1885.5Z" fill="#00cccc" stroke="#fff" stroke-width="1"/>
<text x="527" y="1883" textLength="96" lengthAdjust="spacingAndGlyphs">UniRef100_Q5PYQ1</text>
<rect x="10" y="1890" width="517" height="3" fill="#000033"/>
<rect x="97" y="1890" width="415" height="3" fill="#00cccc"/>
<rect x="96" y="1887" width="1" height="9" fill="#fff"/>
<path d="M512.5 1886.5L517.5 1891.5L512.5 1896.5Z" fill="#00cccc" stroke="#fff" stroke-width="1"/>
<rect x="104" y="1893" width="1" height="2" fill="#ffee88"/><rect x="103" y="1895" width="3" height="2" fill="#ffee88"/>
<text x="527" y="1894" textLength="96" lengthAdjust="spacingAndGlyphs">UniRef100_Q41787</text>
<rect x="97" y="1901" width="415" height="3" fill="#00cccc"/>
<rect x="96" y="1898" width="1" height="9" fill="#fff"/>
<path d="M512.5 1897.5L517.5 1902.5L512.5 1907.5Z" fill="#00cccc" stroke="#fff" stroke-width="1"/>
<text x="527" y="1905" textLength="96" lengthAdjust="spacingAndGlyphs">UniRef100_Q41425</text>
<rect x="10" y="1912" width="517" height="3" fill="#000033"/>
<rect x="48" y="1912" width="464" height="3" fill="#00cccc"/>
<rect x="47" y="1909" width="1" height="9" fill="#fff"/>
<path d="M512.5 1908.5L517.5 1913.5L512.5 1918.5Z" fill="#00cccc" stroke="#fff" stroke-width="1"/>
<text x="527" y="1916" textLength="96" lengthAdjust="spacingAndGlyphs">UniRef100_Q39768</text>
<rect x="116" y="1923" width="396" height="3" fill="#00cccc"/>
<rect x="115" y="1920" width="1" height="9" fill="#fff"/>
<path d="M512.5 1919.5L517.5 1924.5L512.5 1929.5Z" fill="#00cccc" stroke="#fff" stroke-width="1"/>
<text x="527" y="1927" textLength="96" lengthAdjust="spacingAndGlyphs">UniRef100_Q1EP00</text>
<rect x="10" y="1934" width="517" height="3" fill="#000033"/>
<rect x="97" y="1934" width="415" height="3" fill="#00cccc"/>
<rect x="96" y="1931" width="1" height="9" fill="#fff"/>
<path d="M512.5 1930.5L517.5 1935.5L512.5 1940.5Z" fill="#00cccc" stroke="#fff" stroke-width="1"/>
<text x="527" y="1938" textLength="96" lengthAdjust="spacingAndGlyphs">UniRef100_Q153I7</text>
<rect x="116" y="1945" width="396" height="3" fill="#00cccc"/>
<rect x="115" y="1942" width="1" height="9" fill="#fff"/>
<path d="M512.5 1941.5L517.5 1946.5L512.5 1951.5Z" fill="#00cccc" stroke="#fff" stroke-width="1"/>
<text x="527" y="1949" textLength="96" lengthAdjust="spacingAndGlyphs">UniRef100_O64450</text>
<rect x="10" y="1956" width="517" height="3" fill="#000033"/>
<rect x="116" y="1956" width="396" height="3" fill="#00cccc"/>
<rect x="115" y="1953" width="1" height="9" fill="#fff"/>
<path d="M512.5 1952.5L517.5 1957.5L512.5 1962.5Z" fill="#00cccc" stroke="#fff" stroke-width="1"/>
<text x="527" y="1960" textLength="96" lengthAdjust="spacingAndGlyphs">UniRef100_O64446</text>
<rect x="116" y="1967" width="396" height="3" fill="#00cccc"/>
<rect x="115" y="1964" width="1" height="9" fill="#fff"/>
<path d="M512.5 1963.5L517.5 1968.5L512.5 1973.5Z" fill="#00cccc" stroke="#fff" stroke-width="1"/>
<text x="527" y="1971" textLength="96" lengthAdjust="spacingAndGlyphs">UniRef100_O64443</text>
<rect x="10" y="1978" width="517" height="3" fill="#000033"/>
<rect x="116" y="1978" width="396" height="3" fill="#00cccc"/>
<rect x="115" y="1975" width="1" height="9" fill="#fff"/>
<path d="M512.5 1974.5L517.5 1979.5L512.5 1984.5Z" fill="#00cccc" stroke="#fff" stroke-width="1"/>
<text x="527" y="1982" textLength="96" lengthAdjust="spacingAndGlyphs">UniRef100_B9T0C1</text>
<rect x="116" y="1989" width="396" height="3" fill="#00cccc"/>
<rect x="115" y="1986" width="1" height="9" fill="#fff"/>
<path d="M512.5 1985.5L517.5 1990.5L512.5 1995.5Z" fill="#00cccc" stroke="#fff" stroke-width="1"/>
<text x="527" y="1993" textLength="96" lengthAdjust="spacingAndGlyphs">UniRef100_A2SY46</text>
<rect x="10" y="2000" width="517" height="3" fill="#000033"/>
<rect x="116" y="2000" width="396" height="3" fill="#00cccc"/>
<rect x="115" y="1997" width="1" height="9" fill="#fff"/>
<path d="M512.5 1996.5L517.5 2001.5L512.5 2006.5Z" fill="#00cccc" stroke="#fff" stroke-width="1"/>
<text x="527" y="2004" textLength="96" lengthAdjust="spacingAndGlyphs">UniRef100_P12333</text>
<rect x="116" y="2011" width="396" height="3" fill="#00cccc"/>
<rect x="115" y="2008" width="1" height="9" fill="#fff"/>
<path d="M512.5 2007.5L517.5 2012.5L512.5 2017.5Z" fill="#00cccc" stroke="#fff" stroke-width="1"/>
<text x="527" y="2015" textLength="96" lengthAdjust="spacingAndGlyphs">UniRef100_P27496</text>
<rect x="10" y="2022" width="517" height="3" fill="#000033"/>
<rect x="116" y="2022" width="396" height="3" fill="#00cccc"/>
<rect x="115" y="2019" width="1" height="9" fill="#fff"/>
<path d="M512.5 2018.5L517.5 2023.5L512.5 2028.5Z" fill="#00cccc" stroke="#fff" stroke-width="1"/>
<text x="527" y="2026" textLength="96" lengthAdjust="spacingAndGlyphs">UniRef100_P27495</text>
<rect x="116" y="2033" width="396" height="3" fill="#00cccc"/>
<rect x="115" y="2030" width="1" height="9" fill="#fff"/>
<path d="M512.5 2029.5L517.5 2034.5L512.5 2039.5Z" fill="#00cccc" stroke="#fff" stroke-width="1"/>
<text x="527" y="2037" textLength="96" lengthAdjust="spacingAndGlyphs">UniRef100_P12331</text>
<rect x="10" y="2044" width="517" height="3" fill="#000033"/>
<rect x="116" y="2044" width="396" height="3" fill="#00cccc"/>
<rect x="115" y="2041" width="1" height="9" fill="#fff"/>
<path d="M512.5 2040.5L517.5 2045.5L512.5 2050.5Z" fill="#00cccc" stroke="#fff" stroke-width="1"/>
<text x="527" y="2048" textLength="96" lengthAdjust="spacingAndGlyphs">UniRef100_P27492</text>
<rect x="116" y="2055" width="396" height="3" fill="#00cccc"/>
<rect x="115" y="2052" width="1" height="9" fill="#fff"/>
<path d="M512.5 2051.5L517.5 2056.5L512.5 2061.5Z" fill="#00cccc" stroke="#fff" stroke-width="1"/>
<text x="527" y="2059" textLength="96" lengthAdjust="spacingAndGlyphs">UniRef100_P12471</text>
<rect x="10" y="2066" width="517" height="3" fill="#000033"/>
<rect x="116" y="2066" width="396" height="3" fill="#00cccc"/>
<rect x="115" y="2063" width="1" height="9" fill="#fff"/>
<path d="M512.5 2062.5L517.5 2067.5L512.5 2072.5Z" fill="#00cccc" stroke="#fff" stroke-width="1"/>
<text x="527" y="2070" textLength="96" lengthAdjust="spacingAndGlyphs">UniRef100_P27520</text>
<rect x="116" y="2077" width="396" height="3" fill="#00cccc"/>
<rect x="115" y="2074" width="1" height="9" fill="#fff"/>
<path d="M512.5 2073.5L517.5 2078.5L512.5 2083.5Z" fill="#00cccc" stroke="#fff" stroke-width="1"/>
<text x="527" y="2081" textLength="96" lengthAdjust="spacingAndGlyphs">UniRef100_Q2XTE0</text>
<rect x="10" y="2088" width="517" height="3" fill="#000033"/>
<rect x="116" y="2088" width="396" height="3" fill="#00cccc"/>
<rect x="115" y="2085" width="1" height="9" fill="#fff"/>
<path d="M512.5 2084.5L517.5 2089.5L512.5 2094.5Z" fill="#00cccc" stroke="#fff" stroke-width="1"/>
<text x="527" y="2092" textLength="96" lengthAdjust="spacingAndGlyphs">UniRef100_Q00984</text>
<rect x="116" y="2099" width="396" height="3" fill="#00cccc"/>
<rect x="115" y="2096" width="1" height="9" fill="#fff"/>
<path d="M512.5 2095.5L517.5 2100.5L512.5 2105.5Z" fill="#00cccc" stroke="#fff" stroke-width="1"/>
<text x="527" y="2103" textLength="96" lengthAdjust="spacingAndGlyphs">UniRef100_B6RAX2</text>
<rect x="10" y="2110" width="517" height="3" fill="#000033"/>
<rect x="116" y="2110" width="396" height="3" fill="#00cccc"/>
<rect x="115" y="2107" width="1" height="9" fill="#fff"/>
<path d="M512.5 2106.5L517.5 2111.5L512.5 2116.5Z" fill="#00cccc" stroke="#fff" stroke-width="1"/>
<text x="527" y="2114" textLength="96" lengthAdjust="spacingAndGlyphs">UniRef100_B3VN37</text>
<rect x="116" y="2121" width="396" height="3" fill="#00cccc"/>
<rect x="115" y="2118" width="1" height="9" fill="#fff"/>
<path d="M512.5 2117.5L517.5 2122.5L512.5 2127.5Z" fill="#00cccc" stroke="#fff" stroke-width="1"/>
<text x="527" y="2125" textLength="96" lengthAdjust="spacingAndGlyphs">UniRef100_B0L0Y1</text>
<rect x="10" y="2132" width="517" height="3" fill="#000033"/>
<rect x="116" y="2132" width="396" height="3" fill="#00cccc"/>
<rect x="115" y="2129" width="1" height="9" fill="#fff"/>
<path d="M512.5 2128.5L517.5 2133.5L512.5 2138.5Z" fill="#00cccc" stroke="#fff" stroke-width="1"/>
<text x="527" y="2136" textLength="96" lengthAdjust="spacingAndGlyphs">UniRef100_P07369</text>
<rect x="97" y="2143" width="415" height="3" fill="#00cccc"/>
<rect x="96" y="2140" width="1" height="9" fill="#fff"/>
<path d="M512.5 2139.5L517.5 2144.5L512.5 2149.5Z" fill="#00cccc" stroke="#fff" stroke-width="1"/>
<text x="527" y="2147" textLength="96" lengthAdjust="spacingAndGlyphs">UniRef100_Q8LCZ4</text>
<rect x="10" y="2154" width="517" height="3" fill="#000033"/>
<rect x="116" y="2154" width="396" height="3" fill="#00cccc"/>
<rect x="115" y="2151" width="1" height="9" fill="#fff"/>
<path d="M512.5 2150.5L517.5 2155.5L512.5 2160.5Z" fill="#00cccc" stroke="#fff" stroke-width="1"/>
<text x="527" y="2158" textLength="96" lengthAdjust="spacingAndGlyphs">UniRef100_Q84TM7</text>
<rect x="97" y="2165" width="415" height="3" fill="#00cccc"/>
<rect x="96" y="2162" width="1" height="9" fill="#fff"/>
<path d="M512.5 2161.5L517.5 2166.5L512.5 2171.5Z" fill="#00cccc" stroke="#fff" stroke-width="1"/>
<text x="527" y="2169" textLength="96" lengthAdjust="spacingAndGlyphs">UniRef100_Q39142</text>
<rect x="10" y="2176" width="517" height="3" fill="#000033"/>
<rect x="97" y="2176" width="415" height="3" fill="#00cccc"/>
<rect x="96" y="2173" width="1" height="9" fill="#fff"/>
<path d="M512.5 2172.5L517.5 2177.5L512.5 2182.5Z" fill="#00cccc" stroke="#fff" stroke-width="1"/>
<text x="527" y="2180" textLength="96" lengthAdjust="spacingAndGlyphs">UniRef100_Q39141</text>
<rect x="116" y="2187" width="396" height="3" fill="#00cccc"/>
<rect x="115" y="2184" width="1" height="9" fill="#fff"/>
<path d="M512.5 2183.5L517.5 2188.5L512.5 2193.5Z" fill="#00cccc" stroke="#fff" stroke-width="1"/>
<text x="527" y="2191" textLength="96" lengthAdjust="spacingAndGlyphs">UniRef100_B7FHZ5</text>
<rect x="10" y="2198" width="517" height="3" fill="#000033"/>
<rect x="116" y="2198" width="396" height="3" fill="#00cccc"/>
<rect x="115" y="2195" width="1" height="9" fill="#fff"/>
<path d="M512.5 2194.5L517.5 2199.5L512.5 2204.5Z" fill="#00cccc" stroke="#fff" stroke-width="1"/>
<text x="527" y="2202" textLength="96" lengthAdjust="spacingAndGlyphs">UniRef100_A6N154</text>
<rect x="104" y="2209" width="408" height="3" fill="#00cccc"/>
<rect x="103" y="2206" width="1" height="9" fill="#fff"/>
<path d="M512.5 2205.5L517.5 2210.5L512.5 2215.5Z" fill="#00cccc" stroke="#fff" stroke-width="1"/>
<text x="527" y="2213" textLength="96" lengthAdjust="spacingAndGlyphs">UniRef100_P27518</text>
<rect x="10" y="2220" width="517" height="3" fill="#000033"/>
<rect x="116" y="2220" width="396" height="3" fill="#00cccc"/>
<rect x="115" y="2217" width="1" height="9" fill="#fff"/>
<path d="M512.5 2216.5L517.5 2221.5L512.5 2226.5Z" fill="#00cccc" stroke="#fff" stroke-width="1"/>
<text x="527" y="2224" textLength="96" lengthAdjust="spacingAndGlyphs">UniRef100_Q9AXF6</text>
<rect x="116" y="2231" width="396" height="3" fill="#00cccc"/>
<rect x="115" y="2228" width="1" height="9" fill="#fff"/>
<path d="M512.5 2227.5L517.5 2232.5L512.5 2237.5Z" fill="#00cccc" stroke="#fff" stroke-width="1"/>
<text x="527" y="2235" textLength="96" lengthAdjust="spacingAndGlyphs">UniRef100_Q93WE0</text>
<rect x="10" y="2242" width="517" height="3" fill="#000033"/>
<rect x="116" y="2242" width="396" height="3" fill="#00cccc"/>
<rect x="115" y="2239" width="1" height="9" fill="#fff"/>
<path d="M512.5 2238.5L517.5 2243.5L512.5 2248.5Z" fill="#00cccc" stroke="#fff" stroke-width="1"/>
<text x="527" y="2246" textLength="96" lengthAdjust="spacingAndGlyphs">UniRef100_O64444</text>
<rect x="30" y="2253" width="482" height="3" fill="#00a000"/>
<rect x="29" y="2250" width="1" height="9" fill="#fff"/>
<path d="M512.5 2249.5L517.5 2254.5L512.5 2259.5Z" fill="#00a000" stroke="#fff" stroke-width="1"/>
<rect x="59" y="2256" width="1" height="2" fill="#ffee88"/><rect x="58" y="2258" width="3" height="2" fill="#ffee88"/>
<text x="527" y="2257" textLength="96" lengthAdjust="spacingAndGlyphs">UniRef100_O64442</text>
<rect x="10" y="2264" width="517" height="3" fill="#000033"/>
<rect x="116" y="2264" width="396" height="3" fill="#00cccc"/>
<rect x="115" y="2261" width="1" height="9" fill="#fff"/>
<path d="M512.5 2260.5L517.5 2265.5L512.5 2270.5Z" fill="#00cccc" stroke="#fff" stroke-width="1"/>
<text x="527" y="2268" textLength="96" lengthAdjust="spacingAndGlyphs">UniRef100_C6TD73</text>
<rect x="116" y="2275" width="396" height="3" fill="#00cccc"/>
<rect x="115" y="2272" width="1" height="9" fill="#fff"/>
<path d="M512.5 2271.5L517.5 2276.5L512.5 2281.5Z" fill="#00cccc" stroke="#fff" stroke-width="1"/>
<text x="527" y="2279" textLength="96" lengthAdjust="spacingAndGlyphs">UniRef100_B9IAR5</text>
<rect x="10" y="2286" width="517" height="3" fill="#000033"/>
<rect x="116" y="2286" width="396" height="3" fill="#00cccc"/>
<rect x="115" y="2283" width="1" height="9" fill="#fff"/>
<path d="M512.5 2282.5L517.5 2287.5L512.5 2292.5Z" fill="#00cccc" stroke="#fff" stroke-width="1"/>
<text x="527" y="2290" textLength="96" lengthAdjust="spacingAndGlyphs">UniRef100_B2BAK8</text>
<rect x="116" y="2297" width="396" height="3" fill="#00cccc"/>
<rect x="115" y="2294" width="1" height="9" fill="#fff"/>
<path d="M512.5 2293.5L517.5 2298.5L512.5 2303.5Z" fill="#00cccc" stroke="#fff" stroke-width="1"/>
<text x="527" y="2301" textLength="96" lengthAdjust="spacingAndGlyphs">UniRef100_A9NLD5</text>
<rect x="10" y="2308" width="517" height="3" fill="#000033"/>
<rect x="116" y="2308" width="396" height="3" fill="#00cccc"/>
<rect x="115" y="2305" width="1" height="9" fill="#fff"/>
<path d="M512.5 2304.5L517.5 2309.5L512.5 2314.5Z" fill="#00cccc" stroke="#fff" stroke-width="1"/>
<text x="527" y="2312" textLength="96" lengthAdjust="spacingAndGlyphs">UniRef100_P04782</text>
<rect x="116" y="2319" width="396" height="3" fill="#00cccc"/>
<rect x="115" y="2316" width="1" height="9" fill="#fff"/>
<path d="M512.5 2315.5L517.5 2320.5L512.5 2325.5Z" fill="#00cccc" stroke="#fff" stroke-width="1"/>
<text x="527" y="2323" textLength="96" lengthAdjust="spacingAndGlyphs">UniRef100_Q9LKH9</text>
<rect x="10" y="2330" width="517" height="3" fill="#000033"/>
<rect x="116" y="2330" width="396" height="3" fill="#00cccc"/>
<rect x="115" y="2327" width="1" height="9" fill="#fff"/>
<path d="M512.5 2326.5L517.5 2331.5L512.5 2336.5Z" fill="#00cccc" stroke="#fff" stroke-width="1"/>
<text x="527" y="2334" textLength="96" lengthAdjust="spacingAndGlyphs">UniRef100_Q575T2</text>
<rect x="116" y="2341" width="396" height="3" fill="#00cccc"/>
<rect x="115" y="2338" width="1" height="9" fill="#fff"/>
<path d="M512.5 2337.5L517.5 2342.5L512.5 2347.5Z" fill="#00cccc" stroke="#fff" stroke-width="1"/>
<text x="527" y="2345" textLength="96" lengthAdjust="spacingAndGlyphs">UniRef100_O64448</text>
<rect x="10" y="2352" width="517" height="3" fill="#000033"/>
<rect x="116" y="2352" width="396" height="3" fill="#00cccc"/>
<rect x="115" y="2349" width="1" height="9" fill="#fff"/>
<path d="M512.5 2348.5L517.5 2353.5L512.5 2358.5Z" fill="#00cccc" stroke="#fff" stroke-width="1"/>
<text x="527" y="2356" textLength="96" lengthAdjust="spacingAndGlyphs">UniRef100_B6T2Y9</text>
<rect x="116" y="2363" width="396" height="3" fill="#00cccc"/>
<rect x="115" y="2360" width="1" height="9" fill="#fff"/>
<path d="M512.5 2359.5L517.5 2364.5L512.5 2369.5Z" fill="#00cccc" stroke="#fff" stroke-width="1"/>
<text x="527" y="2367" textLength="96" lengthAdjust="spacingAndGlyphs">UniRef100_B4G143</text>
<rect x="10" y="2374" width="517" height="3" fill="#000033"/>
<rect x="116" y="2374" width="396" height="3" fill="#00cccc"/>
<rect x="115" y="2371" width="1" height="9" fill="#fff"/>
<path d="M512.5 2370.5L517.5 2375.5L512.5 2380.5Z" fill="#00cccc" stroke="#fff" stroke-width="1"/>
<text x="527" y="2378" textLength="96" lengthAdjust="spacingAndGlyphs">UniRef100_A9RAS2</text>
<rect x="116" y="2385" width="396" height="3" fill="#00cccc"/>
<rect x="115" y="2382" width="1" height="9" fill="#fff"/>
<path d="M512.5 2381.5L517.5 2386.5L512.5 2391.5Z" fill="#00cccc" stroke="#fff" stroke-width="1"/>
<text x="527" y="2389" textLength="96" lengthAdjust="spacingAndGlyphs">UniRef100_A2SY45</text>
<rect x="10" y="2396" width="517" height="3" fill="#000033"/>
<rect x="116" y="2396" width="396" height="3" fill="#00cccc"/>
<rect x="115" y="2393" width="1" height="9" fill="#fff"/>
<path d="M512.5 2392.5L517.5 2397.5L512.5 2402.5Z" fill="#00cccc" stroke="#fff" stroke-width="1"/>
<text x="527" y="2400" textLength="96" lengthAdjust="spacingAndGlyphs">UniRef100_A2SY44</text>
<rect x="18" y="2407" width="494" height="3" fill="#00a000"/>
<rect x="17" y="2404" width="1" height="9" fill="#fff"/>
<path d="M512.5 2403.5L517.5 2408.5L512.5 2413.5Z" fill="#00a000" stroke="#fff" stroke-width="1"/>
<text x="527" y="2411" textLength="96" lengthAdjust="spacingAndGlyphs">UniRef100_A2SY32</text>
<rect x="10" y="2418" width="517" height="3" fill="#000033"/>
<rect x="116" y="2418" width="396" height="3" fill="#00cccc"/>
<rect x="115" y="2415" width="1" height="9" fill="#fff"/>
<path d="M512.5 2414.5L517.5 2419.5L512.5 2424.5Z" fill="#00cccc" stroke="#fff" stroke-width="1"/>
<text x="527" y="2422" textLength="96" lengthAdjust="spacingAndGlyphs">UniRef100_P27494</text>
<rect x="116" y="2429" width="396" height="3" fill="#00cccc"/>
<rect x="115" y="2426" width="1" height="9" fill="#fff"/>
<path d="M512.5 2425.5L517.5 2430.5L512.5 2435.5Z" fill="#00cccc" stroke="#fff" stroke-width="1"/>
<text x="527" y="2433" textLength="96" lengthAdjust="spacingAndGlyphs">UniRef100_P04159</text>
<rect x="10" y="2440" width="517" height="3" fill="#000033"/>
<rect x="116" y="2440" width="396" height="3" fill="#00cccc"/>
<rect x="115" y="2437" width="1" height="9" fill="#fff"/>
<path d="M512.5 2436.5L517.5 2441.5L512.5 2446.5Z" fill="#00cccc" stroke="#fff" stroke-width="1"/>
<text x="527" y="2444" textLength="96" lengthAdjust="spacingAndGlyphs">UniRef100_Q93YG3</text>
<rect x="116" y="2451" width="396" height="3" fill="#00cccc"/>
<rect x="115" y="2448" width="1" height="9" fill="#fff"/>
<path d="M512.5 2447.5L517.5 2452.5L512.5 2457.5Z" fill="#00cccc" stroke="#fff" stroke-width="1"/>
<text x="527" y="2455" textLength="96" lengthAdjust="spacingAndGlyphs">UniRef100_C6T8R7</text>
<rect x="10" y="2462" width="517" height="3" fill="#000033"/>
<rect x="116" y="2462" width="396" height="3" fill="#00cccc"/>
<rect x="115" y="2459" width="1" height="9" fill="#fff"/>
<path d="M512.5 2458.5L517.5 2463.5L512.5 2468.5Z" fill="#00cccc" stroke="#fff" stroke-width="1"/>
<text x="527" y="2466" textLength="96" lengthAdjust="spacingAndGlyphs">UniRef100_A9RT62</text>
<rect x="30" y="2473" width="482" height="3" fill="#00a000"/>
<rect x="29" y="2470" width="1" height="9" fill="#fff"/>
<path d="M512.5 2469.5L517.5 2474.5L512.5 2479.5Z" fill="#00a000" stroke="#fff" stroke-width="1"/>
<rect x="59" y="2476" width="1" height="2" fill="#ffee88"/><rect x="58" y="2478" width="3" height="2" fill="#ffee88"/>
<text x="527" y="2477" textLength="96" lengthAdjust="spacingAndGlyphs">UniRef100_A9RNP2</text>
<rect x="10" y="2484" width="517" height="3" fill="#000033"/>
<rect x="116" y="2484" width="396" height="3" fill="#00cccc"/>
<rect x="115" y="2481" width="1" height="9" fill="#fff"/>
<path d="M512.5 2480.5L517.5 2485.5L512.5 2490.5Z" fill="#00cccc" stroke="#fff" stroke-width="1"/>
<text x="527" y="2488" textLength="96" lengthAdjust="spacingAndGlyphs">UniRef100_A2SY35</text>
<rect x="116" y="2495" width="396" height="3" fill="#00cccc"/>
<rect x="115" y="2492" width="1" height="9" fill="#fff"/>
<path d="M512.5 2491.5L517.5 2496.5L512.5 2501.5Z" fill="#00cccc" stroke="#fff" stroke-width="1"/>
<text x="527" y="2499" textLength="96" lengthAdjust="spacingAndGlyphs">UniRef100_P14279</text>
<rect x="10" y="2506" width="517" height="3" fill="#000033"/>
<rect x="116" y="2506" width="396" height="3" fill="#00cccc"/>
<rect x="115" y="2503" width="1" height="9" fill="#fff"/>
<path d="M512.5 2502.5L517.5 2507.5L512.5 2512.5Z" fill="#00cccc" stroke="#fff" stroke-width="1"/>
<text x="527" y="2510" textLength="96" lengthAdjust="spacingAndGlyphs">UniRef100_O82425</text>
<rect x="30" y="2517" width="482" height="3" fill="#00a000"/>
<rect x="29" y="2514" width="1" height="9" fill="#fff"/>
<path d="M512.5 2513.5L517.5 2518.5L512.5 2523.5Z" fill="#00a000" stroke="#fff" stroke-width="1"/>
<rect x="59" y="2520" width="1" height="2" fill="#ffee88"/><rect x="58" y="2522" width="3" height="2" fill="#ffee88"/>
<text x="527" y="2521" textLength="96" lengthAdjust="spacingAndGlyphs">UniRef100_A9S6F4</text>
<rect x="10" y="2528" width="517" height="3" fill="#000033"/>
<rect x="116" y="2528" width="396" height="3" fill="#00cccc"/>
<rect x="115" y="2525" width="1" height="9" fill="#fff"/>
<path d="M512.5 2524.5L517.5 2529.5L512.5 2534.5Z" fill="#00cccc" stroke="#fff" stroke-width="1"/>
<text x="527" y="2532" textLength="96" lengthAdjust="spacingAndGlyphs">UniRef100_P12062</text>
<rect x="116" y="2539" width="396" height="3" fill="#00cccc"/>
<rect x="115" y="2536" width="1" height="9" fill="#fff"/>
<path d="M512.5 2535.5L517.5 2540.5L512.5 2545.5Z" fill="#00cccc" stroke="#fff" stroke-width="1"/>
<text x="527" y="2543" textLength="96" lengthAdjust="spacingAndGlyphs">UniRef100_P14278</text>
<rect x="10" y="2550" width="517" height="3" fill="#000033"/>
<rect x="116" y="2550" width="396" height="3" fill="#00cccc"/>
<rect x="115" y="2547" width="1" height="9" fill="#fff"/>
<path d="M512.5 2546.5L517.5 2551.5L512.5 2556.5Z" fill="#00cccc" stroke="#fff" stroke-width="1"/>
<text x="527" y="2554" textLength="96" lengthAdjust="spacingAndGlyphs">UniRef100_P04780</text>
<rect x="116" y="2561" width="396" height="3" fill="#00cccc"/>
<rect x="115" y="2558" width="1" height="9" fill="#fff"/>
<path d="M512.5 2557.5L517.5 2562.5L512.5 2567.5Z" fill="#00cccc" stroke="#fff" stroke-width="1"/>
<text x="527" y="2565" textLength="96" lengthAdjust="spacingAndGlyphs">UniRef100_Q9LKI1</text>
<rect x="10" y="2572" width="517" height="3" fill="#000033"/>
<rect x="18" y="2572" width="481" height="3" fill="#00a000"/>
<rect x="17" y="2569" width="1" height="9" fill="#fff"/>
<path d="M499.5 2568.5L504.5 2573.5L499.5 2578.5Z" fill="#00a000" stroke="#fff" stroke-width="1"/>
<rect x="51" y="2575" width="1" height="2" fill="#ffee88"/><rect x="50" y="2577" width="3" height="2" fill="#ffee88"/>
<text x="527" y="2576" textLength="96" lengthAdjust="spacingAndGlyphs">UniRef100_Q5CCK8</text>
<rect x="97" y="2583" width="415" height="3" fill="#00cccc"/>
<rect x="96" y="2580" width="1" height="9" fill="#fff"/>
<path d="M512.5 2579.5L517.5 2584.5L512.5 2589.5Z" fill="#00cccc" stroke="#fff" stroke-width="1"/>
<rect x="104" y="2586" width="1" height="2" fill="#ffee88"/><rect x="103" y="2588" width="3" height="2" fill="#ffee88"/>
<text x="527" y="2587" textLength="96" lengthAdjust="spacingAndGlyphs">UniRef100_O24226</text>
<rect x="10" y="2594" width="517" height="3" fill="#000033"/>
<rect x="116" y="2594" width="396" height="3" fill="#00cccc"/>
<rect x="115" y="2591" width="1" height="9" fill="#fff"/>
<path d="M512.5 2590.5L517.5 2595.5L512.5 2600.5Z" fill="#00cccc" stroke="#fff" stroke-width="1"/>
<text x="527" y="2598" textLength="96" lengthAdjust="spacingAndGlyphs">UniRef100_A9TL35</text>
<rect x="30" y="2605" width="482" height="3" fill="#00a000"/>
<rect x="29" y="2602" width="1" height="9" fill="#fff"/>
<path d="M512.5 2601.5L517.5 2606.5L512.5 2611.5Z" fill="#00a000" stroke="#fff" stroke-width="1"/>
<rect x="59" y="2608" width="1" height="2" fill="#ffee88"/><rect x="58" y="2610" width="3" height="2" fill="#ffee88"/>
<text x="527" y="2609" textLength="96" lengthAdjust="spacingAndGlyphs">UniRef100_A9T769</text>
<rect x="10" y="2616" width="517" height="3" fill="#000033"/>
<rect x="116" y="2616" width="396" height="3" fill="#00cccc"/>
<rect x="115" y="2613" width="1" height="9" fill="#fff"/>
<path d="M512.5 2612.5L517.5 2617.5L512.5 2622.5Z" fill="#00cccc" stroke="#fff" stroke-width="1"/>
<text x="527" y="2620" textLength="96" lengthAdjust="spacingAndGlyphs">UniRef100_P04783</text>
<rect x="116" y="2627" width="396" height="3" fill="#00cccc"/>
<rect x="115" y="2624" width="1" height="9" fill="#fff"/>
<path d="M512.5 2623.5L517.5 2628.5L512.5 2633.5Z" fill="#00cccc" stroke="#fff" stroke-width="1"/>
<text x="527" y="2631" textLength="96" lengthAdjust="spacingAndGlyphs">UniRef100_P12470</text>
<rect x="10" y="2638" width="517" height="3" fill="#000033"/>
<rect x="116" y="2638" width="396" height="3" fill="#00cccc"/>
<rect x="115" y="2635" width="1" height="9" fill="#fff"/>
<path d="M512.5 2634.5L517.5 2639.5L512.5 2644.5Z" fill="#00cccc" stroke="#fff" stroke-width="1"/>
<text x="527" y="2642" textLength="96" lengthAdjust="spacingAndGlyphs">UniRef100_P04781</text>
<rect x="116" y="2649" width="396" height="3" fill="#00cccc"/>
<rect x="115" y="2646" width="1" height="9" fill="#fff"/>
<path d="M512.5 2645.5L517.5 2650.5L512.5 2655.5Z" fill="#00cccc" stroke="#fff" stroke-width="1"/>
<text x="527" y="2653" textLength="96" lengthAdjust="spacingAndGlyphs">UniRef100_Q765P6</text>
<rect x="10" y="2660" width="517" height="3" fill="#000033"/>
<rect x="116" y="2660" width="396" height="3" fill="#00cccc"/>
<rect x="115" y="2657" width="1" height="9" fill="#fff"/>
<path d="M512.5 2656.5L517.5 2661.5L512.5 2666.5Z" fill="#00cccc" stroke="#fff" stroke-width="1"/>
<text x="527" y="2664" textLength="96" lengthAdjust="spacingAndGlyphs">UniRef100_Q41823</text>
<rect x="116" y="2671" width="396" height="3" fill="#00cccc"/>
<rect x="115" y="2668" width="1" height="9" fill="#fff"/>
<path d="M512.5 2667.5L517.5 2672.5L512.5 2677.5Z" fill="#00cccc" stroke="#fff" stroke-width="1"/>
<text x="527" y="2675" textLength="96" lengthAdjust="spacingAndGlyphs">UniRef100_A9T914</text>
<rect x="10" y="2682" width="517" height="3" fill="#000033"/>
<rect x="116" y="2682" width="396" height="3" fill="#00cccc"/>
<rect x="115" y="2679" width="1" height="9" fill="#fff"/>
<path d="M512.5 2678.5L517.5 2683.5L512.5 2688.5Z" fill="#00cccc" stroke="#fff" stroke-width="1"/>
<text x="527" y="2686" textLength="96" lengthAdjust="spacingAndGlyphs">UniRef100_A9RJS3</text>
<rect x="116" y="2693" width="396" height="3" fill="#00cccc"/>
<rect x="115" y="2690" width="1" height="9" fill="#fff"/>
<path d="M512.5 2689.5L517.5 2694.5L512.5 2699.5Z" fill="#00cccc" stroke="#fff" stroke-width="1"/>
<text x="527" y="2697" textLength="96" lengthAdjust="spacingAndGlyphs">UniRef100_Q9XF86</text>
<rect x="10" y="2704" width="517" height="3" fill="#000033"/>
<rect x="116" y="2704" width="396" height="3" fill="#00cccc"/>
<rect x="115" y="2701" width="1" height="9" fill="#fff"/>
<path d="M512.5 2700.5L517.5 2705.5L512.5 2710.5Z" fill="#00cccc" stroke="#fff" stroke-width="1"/>
<text x="527" y="2708" textLength="96" lengthAdjust="spacingAndGlyphs">UniRef100_Q9SYW9</text>
<rect x="116" y="2715" width="396" height="3" fill="#00cccc"/>
<rect x="115" y="2712" width="1" height="9" fill="#fff"/>
<path d="M512.5 2711.5L517.5 2716.5L512.5 2721.5Z" fill="#00cccc" stroke="#fff" stroke-width="1"/>
<text x="527" y="2719" textLength="96" lengthAdjust="spacingAndGlyphs">UniRef100_Q9SHR7</text>
<rect x="10" y="2726" width="517" height="3" fill="#000033"/>
<rect x="116" y="2726" width="396" height="3" fill="#00cccc"/>
<rect x="115" y="2723" width="1" height="9" fill="#fff"/>
<path d="M512.5 2722.5L517.5 2727.5L512.5 2732.5Z" fill="#00cccc" stroke="#fff" stroke-width="1"/>
<text x="527" y="2730" textLength="96" lengthAdjust="spacingAndGlyphs">UniRef100_Q9S7J7</text>
<rect x="97" y="2737" width="415" height="3" fill="#00cccc"/>
<rect x="96" y="2734" width="1" height="9" fill="#fff"/>
<path d="M512.5 2733.5L517.5 2738.5L512.5 2743.5Z" fill="#00cccc" stroke="#fff" stroke-width="1"/>
<text x="527" y="2741" textLength="96" lengthAdjust="spacingAndGlyphs">UniRef100_Q9C8S5</text>
<rect x="10" y="2748" width="517" height="3" fill="#000033"/>
<rect x="97" y="2748" width="415" height="3" fill="#00cccc"/>
<rect x="96" y="2745" width="1" height="9" fill="#fff"/>
<path d="M512.5 2744.5L517.5 2749.5L512.5 2754.5Z" fill="#00cccc" stroke="#fff" stroke-width="1"/>
<text x="527" y="2752" textLength="96" lengthAdjust="spacingAndGlyphs">UniRef100_Q7Y1A1</text>
<rect x="116" y="2759" width="396" height="3" fill="#00cccc"/>
<rect x="115" y="2756" width="1" height="9" fill="#fff"/>
<path d="M512.5 2755.5L517.5 2760.5L512.5 2765.5Z" fill="#00cccc" stroke="#fff" stroke-width="1"/>
<text x="527" y="2763" textLength="96" lengthAdjust="spacingAndGlyphs">UniRef100_Q40065</text>
<rect x="10" y="2770" width="517" height="3" fill="#000033"/>
<rect x="116" y="2770" width="396" height="3" fill="#00cccc"/>
<rect x="115" y="2767" width="1" height="9" fill="#fff"/>
<path d="M512.5 2766.5L517.5 2771.5L512.5 2776.5Z" fill="#00cccc" stroke="#fff" stroke-width="1"/>
<text x="527" y="2774" textLength="96" lengthAdjust="spacingAndGlyphs">UniRef100_A9RBQ3</text>
<rect x="116" y="2781" width="396" height="3" fill="#00cccc"/>
<rect x="115" y="2778" width="1" height="9" fill="#fff"/>
<path d="M512.5 2777.5L517.5 2782.5L512.5 2787.5Z" fill="#00cccc" stroke="#fff" stroke-width="1"/>
<text x="527" y="2785" textLength="96" lengthAdjust="spacingAndGlyphs">UniRef100_P20866</text>
<rect x="10" y="2792" width="517" height="3" fill="#000033"/>
<rect x="97" y="2792" width="415" height="3" fill="#00cccc"/>
<rect x="96" y="2789" width="1" height="9" fill="#fff"/>
<path d="M512.5 2788.5L517.5 2793.5L512.5 2798.5Z" fill="#00cccc" stroke="#fff" stroke-width="1"/>
<text x="527" y="2796" textLength="96" lengthAdjust="spacingAndGlyphs">UniRef100_P04778</text>
</g>
<g class="lab">
<text x="9" y="2815" textLength="66" lengthAdjust="spacingAndGlyphs">Large gaps:</text>
<text x="88" y="2815" textLength="66" lengthAdjust="spacingAndGlyphs">(in Query)/</text>
<text x="166" y="2815" textLength="72" lengthAdjust="spacingAndGlyphs">(in Subject)</text>
<text x="460" y="2815" textLength="54" lengthAdjust="spacingAndGlyphs">=100char.</text>
<text x="14" y="53" textLength="6" lengthAdjust="spacingAndGlyphs">1</text>
<text x="497" y="53" textLength="18" lengthAdjust="spacingAndGlyphs">496</text>
</g>
<path d="M82 2807L85 2815L79 2815Z" fill="#ffee88"/>
<rect x="155" y="2811" width="6" height="1" fill="#00cccc"/>
<rect x="438" y="2807" width="1" height="10" fill="#333300"/>
<rect x="456" y="2807" width="1" height="10" fill="#333300"/>
<rect x="439" y="2810" width="17" height="3" fill="#00cccc"/>
</svg></div>
</body></html>
